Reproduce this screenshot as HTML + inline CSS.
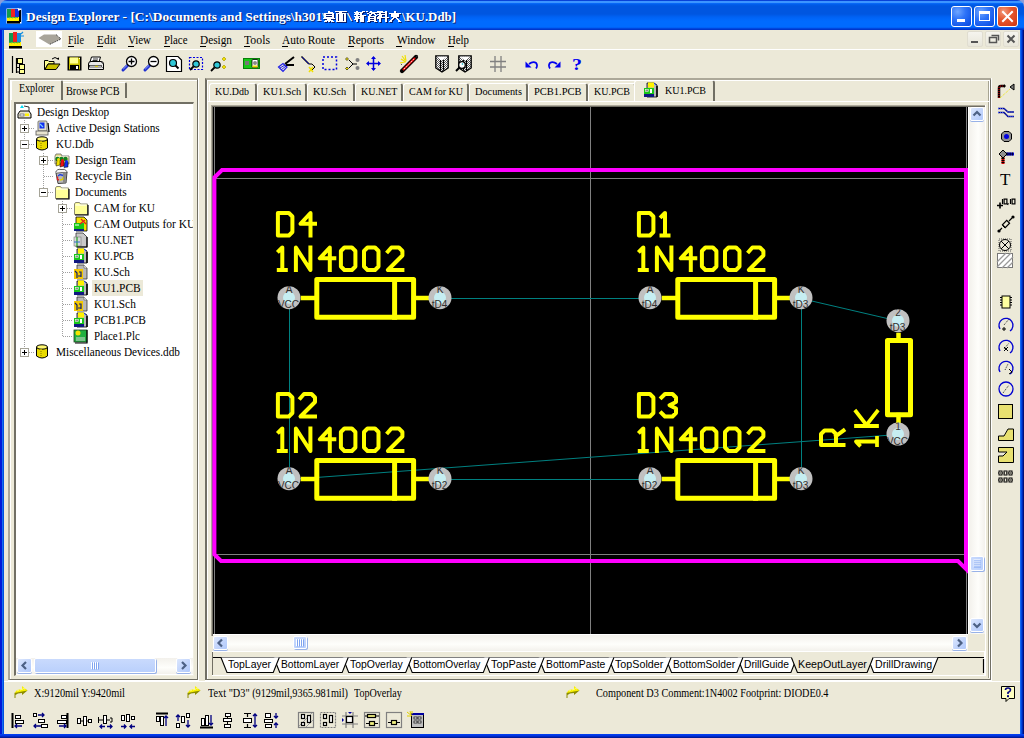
<!DOCTYPE html>
<html><head><meta charset="utf-8"><style>
*{margin:0;padding:0;box-sizing:border-box}
html,body{width:1024px;height:738px;overflow:hidden}
body{position:relative;background:#ECE9D8;font-family:"Liberation Serif",serif;font-size:12px;color:#000}
.a{position:absolute}
.t{white-space:nowrap;line-height:1}
svg{position:absolute;overflow:visible}
</style></head><body>
<div class="a" style="left:0px;top:0px;width:1024px;height:8px;background:#8C9CD8"></div><div class="a" style="left:0;top:0;width:1024px;height:30px;border-radius:7px 7px 0 0;background:linear-gradient(to bottom,#0842D8 0px,#0842D8 1px,#3C95FF 1px,#3C95FF 3px,#0F6FFF 3px,#0060EE 4px,#0056E0 6px,#0056E0 14px,#0062F4 17px,#006BFF 21px,#006BFF 27px,#0058F0 28px,#0036CC 29px,#0036CC 30px)"></div><div class="a" style="left:0px;top:30px;width:4px;height:708px;background:linear-gradient(to right,#0019D8 0,#0019D8 2px,#166EF0 2px,#166EF0 3px,#0050E0 3px)"></div><div class="a" style="left:1020px;top:30px;width:4px;height:708px;background:linear-gradient(to right,#1666F2 0,#1666F2 1px,#0048E0 1px,#0048E0 2px,#0028B8 2px,#0028B8 3px,#001078 3px)"></div><div class="a" style="left:0px;top:734px;width:1024px;height:4px;background:linear-gradient(to bottom,#0543F2 0,#0030E0 50%,#0020A8 75%,#00148A 100%)"></div><div class="a t" style="left:26px;top:10.11px;font-family:'Liberation Serif';font-size:13px;font-weight:700;color:#fff;transform:scaleX(1.0336);transform-origin:0 0;text-shadow:1px 1px 0 #0A1E6E;">Design Explorer - [C:\Documents and Settings\h301\</div><div class="a t" style="left:402px;top:10.11px;font-family:'Liberation Serif';font-size:13px;font-weight:700;color:#fff;transform:scaleX(0.9900);transform-origin:0 0;text-shadow:1px 1px 0 #0A1E6E;">\KU.Ddb]</div><div class="a" style="left:951px;top:6px;width:21px;height:21px;border:1px solid #fff;border-radius:3px;background:radial-gradient(circle at 30% 25%,#6FA6FF 0,#2F74F8 40%,#1155E8 80%,#0C48D8 100%)"></div><div class="a" style="left:974px;top:6px;width:21px;height:21px;border:1px solid #fff;border-radius:3px;background:radial-gradient(circle at 30% 25%,#6FA6FF 0,#2F74F8 40%,#1155E8 80%,#0C48D8 100%)"></div><div class="a" style="left:997px;top:6px;width:21px;height:21px;border:1px solid #fff;border-radius:3px;background:radial-gradient(circle at 30% 25%,#F39B7E 0,#E5582E 40%,#D7401C 80%,#C0340F 100%)"></div><div class="a" style="left:957px;top:19px;width:8px;height:3px;background:#fff"></div><div class="a" style="left:979px;top:11px;width:11px;height:10px;border:1px solid #fff;border-top-width:3px"></div><svg style="left:997px;top:6px" width="21" height="21"><path d="M6 6 L15 15 M15 6 L6 15" stroke="#fff" stroke-width="2" stroke-linecap="square"/></svg><div class="a" style="left:4px;top:49px;width:1016px;height:1px;background:#fff"></div><svg style="left:8px;top:32px" width="17" height="17" viewBox="0 0 17 17"><rect x="1" y="1" width="4" height="9" fill="#109A50"/><rect x="5" y="0" width="4" height="10" fill="#F02020"/><rect x="9" y="1" width="4" height="9" fill="#1890E0"/><path d="M13 2 L15 0 M12 4 L16 4" stroke="#1890E0" stroke-width="1.2"/><rect x="1" y="10" width="12" height="4" fill="#FFF000"/><path d="M1 11 L2 10 L3 11 L5 10 L6 11 L8 10 L9 11 L11 10 L12 11" stroke="#109A50" stroke-width="0.8" fill="none"/><rect x="1" y="14" width="13" height="2.5" fill="#000"/></svg><div class="a" style="left:36px;top:31px;width:26px;height:16px;background:#fff"></div><svg style="left:36px;top:31px" width="26" height="16" viewBox="0 0 26 16"><path d="M2.5 7 L8 3.5 L20 3.5 L25 8 L13.5 13.5 Z" fill="#A8A49A"/><path d="M20 3.5 L25 8 L13.5 13.5" fill="none" stroke="#222" stroke-width="1" stroke-dasharray="1 1"/></svg><div class="a t" style="left:68px;top:33.11px;font-family:'Liberation Serif';font-size:13px;font-weight:400;color:#000;transform:scaleX(0.7907);transform-origin:0 0;">File</div><div class="a" style="left:68px;top:46px;width:6px;height:1px;background:#000"></div><div class="a t" style="left:97px;top:33.11px;font-family:'Liberation Serif';font-size:13px;font-weight:400;color:#000;transform:scaleX(0.8767);transform-origin:0 0;">Edit</div><div class="a" style="left:97px;top:46px;width:6px;height:1px;background:#000"></div><div class="a t" style="left:128px;top:33.11px;font-family:'Liberation Serif';font-size:13px;font-weight:400;color:#000;transform:scaleX(0.8397);transform-origin:0 0;">View</div><div class="a" style="left:128px;top:46px;width:6px;height:1px;background:#000"></div><div class="a t" style="left:163.5px;top:33.11px;font-family:'Liberation Serif';font-size:13px;font-weight:400;color:#000;transform:scaleX(0.8346);transform-origin:0 0;">Place</div><div class="a" style="left:164px;top:46px;width:6px;height:1px;background:#000"></div><div class="a t" style="left:200px;top:33.11px;font-family:'Liberation Serif';font-size:13px;font-weight:400;color:#000;transform:scaleX(0.8685);transform-origin:0 0;">Design</div><div class="a" style="left:200px;top:46px;width:6px;height:1px;background:#000"></div><div class="a t" style="left:244px;top:33.11px;font-family:'Liberation Serif';font-size:13px;font-weight:400;color:#000;transform:scaleX(0.9053);transform-origin:0 0;">Tools</div><div class="a" style="left:244px;top:46px;width:6px;height:1px;background:#000"></div><div class="a t" style="left:282px;top:33.11px;font-family:'Liberation Serif';font-size:13px;font-weight:400;color:#000;transform:scaleX(0.8788);transform-origin:0 0;">Auto Route</div><div class="a" style="left:282px;top:46px;width:6px;height:1px;background:#000"></div><div class="a t" style="left:348px;top:33.11px;font-family:'Liberation Serif';font-size:13px;font-weight:400;color:#000;transform:scaleX(0.8899);transform-origin:0 0;">Reports</div><div class="a" style="left:348px;top:46px;width:6px;height:1px;background:#000"></div><div class="a t" style="left:396.5px;top:33.11px;font-family:'Liberation Serif';font-size:13px;font-weight:400;color:#000;transform:scaleX(0.8701);transform-origin:0 0;">Window</div><div class="a" style="left:396px;top:46px;width:6px;height:1px;background:#000"></div><div class="a t" style="left:448px;top:33.11px;font-family:'Liberation Serif';font-size:13px;font-weight:400;color:#000;transform:scaleX(0.8307);transform-origin:0 0;">Help</div><div class="a" style="left:448px;top:46px;width:6px;height:1px;background:#000"></div><div class="a" style="left:967px;top:31px;width:16px;height:16px;background:linear-gradient(#F5F4EE,#E8E6DA);border:1px solid #E0DDD0;border-radius:2px"></div><div class="a" style="left:985px;top:31px;width:16px;height:16px;background:linear-gradient(#F5F4EE,#E8E6DA);border:1px solid #E0DDD0;border-radius:2px"></div><div class="a" style="left:1003px;top:31px;width:16px;height:16px;background:linear-gradient(#F5F4EE,#E8E6DA);border:1px solid #E0DDD0;border-radius:2px"></div><div class="a" style="left:971px;top:41px;width:7px;height:2px;background:#555"></div><svg style="left:985px;top:31px" width="16" height="16"><rect x="4.5" y="6.5" width="7" height="5" fill="none" stroke="#555" stroke-width="1.5"/><path d="M6.5 4.5 H13.5 V9.5" fill="none" stroke="#555" stroke-width="1.5"/></svg><svg style="left:1003px;top:31px" width="16" height="16"><path d="M4.5 4.5 L11.5 11.5 M11.5 4.5 L4.5 11.5" stroke="#555" stroke-width="2"/></svg><svg style="left:11px;top:55px" width="15" height="19" viewBox="0 0 15 19"><path d="M1.5 1 V18" stroke="#000" stroke-width="1.2"/><path d="M5.5 3 V18 M5.5 6.5 H7 M5.5 12.5 H8 M5.5 17 H8" stroke="#000" stroke-width="1.2" fill="none"/><rect x="6.5" y="3.5" width="5" height="5" fill="#FFFF90" stroke="#000" stroke-width="1"/><rect x="8.5" y="9.5" width="5" height="5" fill="#FFFF90" stroke="#000" stroke-width="1"/><rect x="8.5" y="14.5" width="5" height="4" fill="#FFFF90" stroke="#000" stroke-width="1"/></svg><svg style="left:43px;top:56px" width="18" height="15" viewBox="0 0 18 15"><path d="M1.5 4.5 L5 4.5 L6 5.5 L11 5.5 L11 8 L5 8 L2 13.5 L1.5 13.5 Z" fill="#FFFF90" stroke="#000" stroke-width="1"/><path d="M2 13.5 L5 8 L17 8 L13 13.5 Z" fill="#C8C000" stroke="#000" stroke-width="1"/><path d="M9 3 Q12 0 15 3" fill="none" stroke="#000" stroke-width="1"/><path d="M13.5 2.5 L16 4 L16 1.5 Z" fill="#000"/></svg><svg style="left:67px;top:56px" width="15" height="15" viewBox="0 0 15 15"><rect x="0.5" y="0.5" width="14" height="14" fill="#000"/><rect x="2" y="1.5" width="11" height="12" fill="#C8C000"/><rect x="3" y="1.5" width="8" height="6" fill="#FFFF90"/><rect x="3" y="9" width="9" height="5" fill="#000"/><rect x="9" y="10" width="2" height="3" fill="#fff"/><rect x="12" y="2" width="1" height="1" fill="#fff"/></svg><svg style="left:87px;top:56px" width="18" height="15" viewBox="0 0 18 15"><path d="M4.5 1 H13.5 L12 6 H3 Z" fill="#fff" stroke="#000" stroke-width="1"/><path d="M6 3 H11 M5.5 4.5 H10.5" stroke="#000" stroke-width="0.8"/><path d="M1.5 8 Q1.5 5.5 4 5.5 H14 Q16.5 5.5 16.5 8 V13.5 H1.5 Z" fill="#E8E8E8" stroke="#000" stroke-width="1"/><rect x="2.5" y="9.5" width="12" height="1.5" fill="#fff" stroke="#000" stroke-width="0.6"/><rect x="8" y="9.8" width="3" height="1" fill="#E0D000"/><path d="M14 6 L16 8 M14 10 L16 12" stroke="#555" stroke-width="0.8"/></svg><svg style="left:121px;top:55px" width="17" height="17" viewBox="0 0 17 17"><path d="M2 15 L7 10" stroke="#2030D0" stroke-width="3" stroke-linecap="round"/><path d="M2.2 14.2 L6 10.4" stroke="#90A0FF" stroke-width="1"/><circle cx="10.5" cy="6.5" r="5" fill="#fff" stroke="#000" stroke-width="1.3"/><path d="M7.5 6.5 H13.5 M10.5 3.5 V9.5" stroke="#000" stroke-width="1.3"/></svg><svg style="left:143px;top:55px" width="17" height="17" viewBox="0 0 17 17"><path d="M2 15 L7 10" stroke="#2030D0" stroke-width="3" stroke-linecap="round"/><path d="M2.2 14.2 L6 10.4" stroke="#90A0FF" stroke-width="1"/><circle cx="10.5" cy="6.5" r="5" fill="#fff" stroke="#000" stroke-width="1.3"/><path d="M7.5 6.5 H13.5" stroke="#000" stroke-width="1.3"/></svg><svg style="left:166px;top:56px" width="17" height="16" viewBox="0 0 17 16"><path d="M0.5 0.5 H12 L15.5 4 V15.5 H0.5 Z" fill="#fff" stroke="#000" stroke-width="1.2"/><circle cx="7" cy="7" r="3.5" fill="#30C8D8" stroke="#000" stroke-width="1.2"/><path d="M9.5 9.5 L12.5 12.5" stroke="#000" stroke-width="2"/></svg><svg style="left:188px;top:56px" width="16" height="16" viewBox="0 0 16 16"><rect x="1.5" y="1.5" width="13" height="12" fill="none" stroke="#0000E0" stroke-width="1.2" stroke-dasharray="2 1.5"/><circle cx="8" cy="8" r="3.2" fill="#30C8D8" stroke="#000" stroke-width="1.2"/><path d="M5.5 10.5 L2 14" stroke="#000" stroke-width="1.8"/></svg><svg style="left:210px;top:56px" width="17" height="16" viewBox="0 0 17 16"><circle cx="7" cy="9" r="3.2" fill="#30C8D8" stroke="#000" stroke-width="1.2"/><path d="M4.5 11.5 L1 15" stroke="#000" stroke-width="1.8"/><path d="M14 1 L16 3 L14 5 L12 3 Z M14 9 L16 11 L14 13 L12 11 Z" fill="#F0E000" stroke="#A09000" stroke-width="0.6"/></svg><svg style="left:243px;top:58px" width="18" height="12" viewBox="0 0 18 12"><rect x="0.5" y="0.5" width="16" height="10" fill="#18C818" stroke="#088008"/><rect x="2" y="3" width="4" height="4" fill="#777"/><rect x="9" y="1.5" width="6" height="8" rx="1" fill="#fff" stroke="#000" stroke-width="0.8"/><circle cx="12" cy="5" r="2" fill="#888"/><rect x="9.5" y="7.5" width="5" height="2" fill="#F0E000"/></svg><svg style="left:277px;top:55px" width="18" height="18" viewBox="0 0 18 18"><path d="M8 9 L17 2 M9 10 L17 10" stroke="#000" stroke-width="2"/><path d="M1.5 12 L6 8.5 L10 12 L6 16.5 Z" fill="none" stroke="#2020E8" stroke-width="1.2"/><path d="M3 13 L8 10 M4 15 L9 11" stroke="#2020E8" stroke-width="1"/></svg><svg style="left:300px;top:55px" width="16" height="18" viewBox="0 0 16 18"><path d="M1.5 1.5 L9 9" stroke="#000" stroke-width="1.5"/><path d="M2 2 L9 9" stroke="#0000C0" stroke-width="0.8"/><path d="M9 9 L12 9 L15 12 L12 15" fill="none" stroke="#000" stroke-width="1"/><path d="M9 12 L13 17 M13 12 L9 17" stroke="#F0E000" stroke-width="1.5"/></svg><svg style="left:322px;top:56px" width="16" height="15" viewBox="0 0 16 15"><rect x="1" y="1" width="13.5" height="12.5" fill="none" stroke="#0000E0" stroke-width="1.5" stroke-dasharray="2 2"/></svg><svg style="left:344px;top:56px" width="17" height="16" viewBox="0 0 17 16"><path d="M5 4 L9 8 L5 12" fill="none" stroke="#000" stroke-width="1"/><path d="M9 8 L13 8" stroke="#000" stroke-width="1"/><circle cx="13.5" cy="4" r="2" fill="#808080"/><circle cx="13.5" cy="12" r="2" fill="#808080"/><path d="M3 1.5 L4.5 3 L3 4.5 L1.5 3 Z M3 11 L4.5 12.5 L3 14 L1.5 12.5 Z" fill="#F0E000" stroke="#000" stroke-width="0.6"/></svg><svg style="left:366px;top:56px" width="15" height="15" viewBox="0 0 15 15"><path d="M7.5 1 V14 M1 7.5 H14" stroke="#0000E0" stroke-width="1.5"/><path d="M7.5 0 L5 3 H10 Z M7.5 15 L5 12 H10 Z M0 7.5 L3 5 V10 Z M15 7.5 L12 5 V10 Z" fill="#0000E0"/></svg><svg style="left:399px;top:54px" width="20" height="20" viewBox="0 0 20 20"><path d="M3 17 L17 3" stroke="#000" stroke-width="4.2" stroke-linecap="round"/><path d="M4 16 L16 4" stroke="#E81010" stroke-width="2.2"/><path d="M5 15 L15 5" stroke="#fff" stroke-width="0.8" stroke-dasharray="1.5 1"/><path d="M16.5 3.5 L19 1.5" stroke="#333" stroke-width="1"/><path d="M2 5 L7 8 M6 1 L7 7 M1 9 L6 8 M3 2 L6 6" stroke="#F0E000" stroke-width="1.2"/><path d="M2 10 L3 11" stroke="#555" stroke-width="1"/></svg><svg style="left:435px;top:55px" width="14" height="18" viewBox="0 0 14 18"><defs><pattern id="hatch" width="2" height="2" patternUnits="userSpaceOnUse"><rect width="2" height="2" fill="#fff"/><rect width="1" height="1" fill="#555"/><rect x="1" y="1" width="1" height="1" fill="#555"/></pattern></defs><path d="M0.8 1 L13.2 1 L13.2 13 L7 17 L0.8 13 Z" fill="url(#hatch)" stroke="#000" stroke-width="1.3"/><path d="M1.5 1.5 L7 5.5 L12.5 1.5 Z" fill="#fff"/><path d="M5.5 5 L5.5 15.5 M8.5 5 L8.5 15.5" stroke="#000" stroke-width="1.2"/></svg><svg style="left:455px;top:55px" width="17" height="18" viewBox="0 0 17 18"><path d="M3.8 1 L16.2 1 L16.2 13 L10 17 L3.8 13 Z" fill="url(#hatch)" stroke="#000" stroke-width="1.3"/><path d="M4.5 1.5 L10 5.5 L15.5 1.5 Z" fill="#fff"/><path d="M8.5 5 L8.5 15.5 M11.5 5 L11.5 15.5" stroke="#000" stroke-width="1.2"/><circle cx="7" cy="10" r="3.3" fill="#fff" stroke="#000" stroke-width="1.3"/><path d="M7 8.5 L8 9.5" stroke="#20C0D0" stroke-width="1.5"/><path d="M4.5 12.5 L1 16" stroke="#000" stroke-width="2"/></svg><svg style="left:490px;top:56px" width="16" height="16" viewBox="0 0 16 16"><path d="M5 0 V16 M11 0 V16 M0 5.5 H16 M0 11 H16" stroke="#808080" stroke-width="1.3"/></svg><svg style="left:525px;top:60px" width="14" height="10" viewBox="0 0 14 10"><path d="M4 4 Q8 0.8 11.2 3 Q13 5.5 11 8.5" fill="none" stroke="#0000F0" stroke-width="1.7"/><path d="M0.5 1.5 L0.5 7.5 L6.5 7.5 Z" fill="#0000F0"/></svg><svg style="left:547px;top:60px" width="14" height="10" viewBox="0 0 14 10"><path d="M10 4 Q6 0.8 2.8 3 Q1 5.5 3 8.5" fill="none" stroke="#0000F0" stroke-width="1.7"/><path d="M13.5 1.5 L13.5 7.5 L7.5 7.5 Z" fill="#0000F0"/></svg><div class="a t" style="left:571.5px;top:56.60px;font-family:'Liberation Serif';font-size:16px;font-weight:700;color:#0000F0;transform:scaleX(1.2500);transform-origin:0 0;">?</div><div class="a" style="left:988px;top:80px;width:1px;height:598px;background:#A7A492"></div><div class="a" style="left:989px;top:80px;width:1px;height:598px;background:#fff"></div><svg style="left:997px;top:83px" width="18" height="17" viewBox="0 0 18 17"><path d="M2 15 V5 Q2 3 4 3 H7" fill="none" stroke="#000" stroke-width="2.5"/><path d="M2 15 V5 Q2 3 4 3 H7" fill="none" stroke="#D00000" stroke-width="1.2" stroke-dasharray="1 1"/><path d="M7 1 L9 3 L7 5 Z" fill="#000"/><path d="M3 15 L13 6" stroke="#F0E800" stroke-width="1" stroke-dasharray="1 1"/><path d="M17 1 L13 4 L17 7 Z" fill="#808080" stroke="#000" stroke-width="1"/></svg><svg style="left:997px;top:106px" width="18" height="13" viewBox="0 0 18 13"><path d="M1 2.5 H7 L11 6 H17 M1 6.5 H7 L11 10.5 H17" fill="none" stroke="#000080" stroke-width="1.5"/><path d="M1 2.5 H7 L11 6 H17 M1 6.5 H7 L11 10.5 H17" fill="none" stroke="#4060FF" stroke-width="1" stroke-dasharray="1 1"/></svg><svg style="left:1001px;top:131px" width="11" height="11" viewBox="0 0 11 11"><path d="M3 0.5 H8 L10.5 3 V8 L8 10.5 H3 L0.5 8 V3 Z" fill="#909090" stroke="#000" stroke-width="1"/><circle cx="5.5" cy="5.5" r="2.5" fill="#0000E0"/></svg><svg style="left:999px;top:149px" width="16" height="16" viewBox="0 0 16 16"><path d="M4 5 L4 15" stroke="#D00000" stroke-width="3"/><path d="M4 5 L4 15" stroke="#000" stroke-width="3" stroke-dasharray="1 1"/><path d="M4 5 H15" stroke="#0000D0" stroke-width="3"/><path d="M4 5 H15" stroke="#000" stroke-width="3" stroke-dasharray="1 1.2"/><path d="M4 1 L8 5 L4 9 L0 5 Z" fill="#909090" stroke="#000" stroke-width="1"/></svg><div class="a t" style="left:1000px;top:171px;font-family:'Liberation Serif';font-size:17px;font-weight:400;color:#000">T</div><svg style="left:996px;top:198px" width="22" height="12" viewBox="0 0 22 12"><path d="M1 7.5 H7 M4 4.5 V10.5" stroke="#000" stroke-width="1.6"/><g fill="none" stroke="#000" stroke-width="1.2"><path d="M6.5 1 V6"/><rect x="8.1" y="1.1" width="2.8" height="4.8"/><path d="M12.2 5 L11.6 7"/><path d="M14.5 1 V6"/><rect x="16.1" y="1.1" width="2.8" height="4.8"/></g></svg><svg style="left:996px;top:214px" width="20" height="20" viewBox="0 0 20 20"><path d="M3 17 L6 14 M13 7 L16 4" stroke="#000" stroke-width="1.2"/><circle cx="3" cy="17" r="1.6" fill="#000"/><circle cx="17" cy="3" r="1.6" fill="#000"/><rect x="7" y="8" width="6" height="4" transform="rotate(-45 10 10)" fill="none" stroke="#000" stroke-width="1.2"/><path d="M6.5 11.5 L9 14" stroke="#000" stroke-width="1"/></svg><svg style="left:998px;top:238px" width="14" height="14" viewBox="0 0 14 14"><rect x="1" y="1" width="12" height="12" fill="none" stroke="#555" stroke-width="1" stroke-dasharray="1 1"/><circle cx="7" cy="7" r="5.5" fill="none" stroke="#000" stroke-width="1"/><path d="M3 3 L11 11 M11 3 L3 11" stroke="#000" stroke-width="1"/></svg><svg style="left:997px;top:253px" width="16" height="15" viewBox="0 0 16 15"><rect x="0.5" y="0.5" width="15" height="14" fill="#fff" stroke="#777" stroke-width="1"/><path d="M0 9 L9 0 M0 14 L14 0 M5 15 L16 4 M10 15 L16 9" stroke="#999" stroke-width="1.3"/></svg><svg style="left:999px;top:295px" width="14" height="14" viewBox="0 0 14 14"><rect x="3" y="1" width="8" height="12" fill="#FFFFA0" stroke="#000" stroke-width="1"/><path d="M1 2.5 H3 M1 5 H3 M1 7.5 H3 M1 10 H3 M11 2.5 H13 M11 5 H13 M11 7.5 H13 M11 10 H13" stroke="#000" stroke-width="1"/></svg><svg style="left:998px;top:317px" width="16" height="16" viewBox="0 0 16 16"><path d="M2 12 A7 7 0 1 1 12 14" fill="none" stroke="#0000D0" stroke-width="1.3"/><path d="M6 8 L11 2" stroke="#000" stroke-width="0.8" stroke-dasharray="1 1"/><path d="M4 12 H8 M6 10 V14" stroke="#000" stroke-width="1"/></svg><svg style="left:998px;top:339px" width="16" height="16" viewBox="0 0 16 16"><path d="M2 12 A7 7 0 1 1 12 14" fill="none" stroke="#0000D0" stroke-width="1.3"/><path d="M6 10 L11 4" stroke="#000" stroke-width="0.8" stroke-dasharray="1 1"/><path d="M6 8 L10 12 M10 8 L6 12" stroke="#000" stroke-width="1"/></svg><svg style="left:998px;top:360px" width="16" height="16" viewBox="0 0 16 16"><path d="M2 12 A7 7 0 1 1 12 14" fill="none" stroke="#0000D0" stroke-width="1.3"/><path d="M7 10 L10 4" stroke="#000" stroke-width="0.8" stroke-dasharray="1 1"/><path d="M11 9 L14 12 L11 14" fill="none" stroke="#000" stroke-width="1"/></svg><svg style="left:998px;top:381px" width="16" height="16" viewBox="0 0 16 16"><circle cx="8" cy="8" r="7" fill="none" stroke="#0000D0" stroke-width="1.3"/><path d="M5 12 L11 4" stroke="#000" stroke-width="0.8" stroke-dasharray="1 1"/></svg><svg style="left:998px;top:404px" width="15" height="15" viewBox="0 0 15 15"><rect x="0.5" y="0.5" width="14" height="14" fill="#E8E070" stroke="#000" stroke-width="1"/></svg><svg style="left:998px;top:426px" width="16" height="15" viewBox="0 0 16 15"><path d="M0.5 14.5 V10 H6 L10 3 H15.5 V14.5 Z" fill="#E8E070" stroke="#000" stroke-width="1"/></svg><svg style="left:998px;top:447px" width="16" height="16" viewBox="0 0 16 16"><path d="M0.5 0.5 H15.5 V15.5 H0.5 V9 L5 9 L9 5 L0.5 5 Z" fill="#E8E070" stroke="#000" stroke-width="1"/><path d="M0.5 5 L0.5 0.5" stroke="#000"/></svg><svg style="left:998px;top:470px" width="16" height="14" viewBox="0 0 16 14"><g fill="none" stroke="#000" stroke-width="1"><rect x="1" y="1" width="3" height="4"/><rect x="6" y="1" width="3" height="4"/><rect x="11" y="1" width="3" height="4"/><rect x="1" y="8" width="3" height="4"/><rect x="6" y="8" width="3" height="4"/><rect x="11" y="8" width="3" height="4"/></g><path d="M0 3 H16 M0 10 H16" stroke="#000" stroke-width="1" stroke-dasharray="1 1"/></svg><div class="a" style="left:8px;top:78px;width:191px;height:603px;border-left:2px solid #ACA899;border-top:2px solid #ACA899;border-right:2px solid #716F64;border-bottom:2px solid #716F64"></div><div class="a" style="left:10px;top:80px;width:187px;height:599px;border-left:1px solid #fff;border-top:1px solid #fff"></div><div class="a" style="left:198px;top:78px;width:1px;height:603px;background:#fff"></div><div class="a" style="left:8px;top:680px;width:191px;height:1px;background:#fff"></div><div class="a" style="left:62px;top:82px;width:65px;height:16px;background:#ECE9D8;border-left:1px solid #fff;border-top:1px solid #fff;border-right:2px solid #716F64;border-radius:2px 2px 0 0"></div><div class="a" style="left:11px;top:80px;width:52px;height:20px;background:#ECE9D8;border-left:1px solid #fff;border-top:1px solid #fff;border-right:2px solid #716F64;border-radius:2px 2px 0 0"></div><div class="a t" style="left:19px;top:81.95px;font-family:'Liberation Serif';font-size:12px;font-weight:400;color:#000;transform:scaleX(0.8336);transform-origin:0 0;">Explorer</div><div class="a t" style="left:66px;top:84.95px;font-family:'Liberation Serif';font-size:12px;font-weight:400;color:#000;transform:scaleX(0.8581);transform-origin:0 0;">Browse PCB</div><div class="a" style="left:14px;top:102px;width:180px;height:574px;background:#fff;border-left:2px solid #716F64;border-top:2px solid #716F64;border-right:1px solid #F1EFE2;border-bottom:1px solid #F1EFE2"></div><div class="a" style="left:16px;top:104px;width:177px;height:554px;overflow:hidden"><svg style="left:0px;top:0px" width="177" height="554"><g transform="translate(-16,-104)"><g stroke="#A0A0A0" stroke-width="1" stroke-dasharray="1 1" shape-rendering="crispEdges"><line x1="24.5" y1="120" x2="24.5" y2="352"/><line x1="43.5" y1="153" x2="43.5" y2="192"/><line x1="62.5" y1="201" x2="62.5" y2="336"/><line x1="25" y1="128.5" x2="35" y2="128.5"/><line x1="25" y1="144.5" x2="35" y2="144.5"/><line x1="44" y1="160.5" x2="54" y2="160.5"/><line x1="44" y1="176.5" x2="54" y2="176.5"/><line x1="44" y1="192.5" x2="54" y2="192.5"/><line x1="63" y1="208.5" x2="73" y2="208.5"/><line x1="63" y1="224.5" x2="73" y2="224.5"/><line x1="63" y1="240.5" x2="73" y2="240.5"/><line x1="63" y1="256.5" x2="73" y2="256.5"/><line x1="63" y1="272.5" x2="73" y2="272.5"/><line x1="63" y1="288.5" x2="73" y2="288.5"/><line x1="63" y1="304.5" x2="73" y2="304.5"/><line x1="63" y1="320.5" x2="73" y2="320.5"/><line x1="63" y1="336.5" x2="73" y2="336.5"/><line x1="25" y1="352.5" x2="35" y2="352.5"/></g></g></svg><div class="a" style="left:76px;top:176px;width:51px;height:16px;background:#ECE9D8"></div><svg style="left:0px;top:0px" width="16" height="16"><path d="M2 10 L4 7 L13 7 L15 10 L15 14 L2 14 Z" fill="#E8E4D0" stroke="#000" stroke-width="1"/><rect x="4" y="10" width="4" height="2" fill="#fff" stroke="#444" stroke-width="0.6"/><rect x="9" y="9.5" width="4" height="2.5" fill="#FFF200"/><path d="M6 1 L8 4 L4 4 Z" fill="#00D8F0"/><path d="M8 2 L13 3 L13 7" fill="none" stroke="#000" stroke-width="0.8"/></svg><div class="a t" style="left:21px;top:1.11px;font-family:'Liberation Serif';font-size:13px;font-weight:400;color:#000;transform:scaleX(0.8655);transform-origin:0 0;">Design Desktop</div><svg style="left:19px;top:16px" width="16" height="16"><rect x="3" y="1" width="9" height="10" rx="1" fill="#E4E0CC" stroke="#555" stroke-width="0.8"/><rect x="4.5" y="2.5" width="5" height="6" fill="#1030F0"/><path d="M5 4 L8 7" stroke="#7EC8FF" stroke-width="1.2"/><rect x="1" y="11" width="12" height="4" fill="#E8E4D0" stroke="#555" stroke-width="0.8"/><path d="M13 3 L14 12" stroke="#000" stroke-width="1.2"/></svg><svg style="left:4px;top:20px" width="9" height="9"><rect x="0.5" y="0.5" width="8" height="8" fill="#fff" stroke="#A5A397"/><path d="M2 4.5 H7" stroke="#000" stroke-width="1"/><path d="M4.5 2 V7" stroke="#000" stroke-width="1"/></svg><div class="a t" style="left:40px;top:17.11px;font-family:'Liberation Serif';font-size:13px;font-weight:400;color:#000;transform:scaleX(0.8650);transform-origin:0 0;">Active Design Stations</div><svg style="left:19px;top:32px" width="16" height="16"><path d="M1.5 3 L1.5 12 Q7 16 12.5 12 L12.5 3" fill="#E8DA00" stroke="#000" stroke-width="1"/><ellipse cx="7" cy="3" rx="5.5" ry="2.2" fill="#FFF870" stroke="#000" stroke-width="1"/><path d="M6 5 L6 13" stroke="#B8A800" stroke-width="2" stroke-dasharray="1 1"/></svg><svg style="left:4px;top:36px" width="9" height="9"><rect x="0.5" y="0.5" width="8" height="8" fill="#fff" stroke="#A5A397"/><path d="M2 4.5 H7" stroke="#000" stroke-width="1"/></svg><div class="a t" style="left:40px;top:33.11px;font-family:'Liberation Serif';font-size:13px;font-weight:400;color:#000;transform:scaleX(0.8509);transform-origin:0 0;">KU.Ddb</div><svg style="left:38px;top:48px" width="16" height="16"><path d="M1 4 L2 2 L7 2 L8 4 L15 4 L15 12 L1 12 Z" fill="#E8E090" stroke="#666" stroke-width="0.8"/><path d="M1.5 5 H14.5" stroke="#fff" stroke-width="1"/><circle cx="3.5" cy="7" r="2.2" fill="#108020"/><circle cx="7.5" cy="7" r="2.2" fill="#108020"/><circle cx="11.5" cy="7" r="2.2" fill="#108020"/><path d="M2 14 L3 8 L6 8 L6 13 Z" fill="#F0E000" stroke="#000" stroke-width="0.5"/><path d="M6 15 L7 9 L10 9 L10 14 Z" fill="#F01010" stroke="#000" stroke-width="0.5"/><path d="M10 15.5 L11 10 L14 10 L14 15 Z" fill="#1030F0" stroke="#000" stroke-width="0.5"/><circle cx="4.5" cy="7.5" r="1.5" fill="#F0E000"/><circle cx="8.5" cy="8.5" r="1.5" fill="#F01010"/><circle cx="12.5" cy="9.5" r="1.5" fill="#1030F0"/></svg><svg style="left:23px;top:52px" width="9" height="9"><rect x="0.5" y="0.5" width="8" height="8" fill="#fff" stroke="#A5A397"/><path d="M2 4.5 H7" stroke="#000" stroke-width="1"/><path d="M4.5 2 V7" stroke="#000" stroke-width="1"/></svg><div class="a t" style="left:59px;top:49.11px;font-family:'Liberation Serif';font-size:13px;font-weight:400;color:#000;transform:scaleX(0.8857);transform-origin:0 0;">Design Team</div><svg style="left:38px;top:64px" width="16" height="16"><path d="M2 5 L13 4 L12 15 L4 15.5 Z" fill="#B8B8B8" stroke="#333" stroke-width="0.9"/><path d="M9 5 L12 4.5 L11.5 15 L9 15.3 Z" fill="#888"/><path d="M1.5 4.5 Q3 0.5 7 1.5 Q11 0 13.5 4" fill="#F4F4F4" stroke="#333" stroke-width="0.8"/><path d="M4 8 L6 6.5 L9 7.5" stroke="#2040E0" stroke-width="1.4" fill="none"/><path d="M3.5 8.5 L3.5 11.5 L5 12" stroke="#E02020" stroke-width="1.4" fill="none"/><path d="M6 12 L8.5 11.5 L9 9.5" stroke="#E0D000" stroke-width="1.4" fill="none"/></svg><div class="a t" style="left:59px;top:65.11px;font-family:'Liberation Serif';font-size:13px;font-weight:400;color:#000;transform:scaleX(0.8857);transform-origin:0 0;">Recycle Bin</div><svg style="left:38px;top:80px" width="16" height="16"><path d="M1.5 4 L2.5 2.5 L6.5 2.5 L7.5 4 L14.5 4 L14.5 14.5 L1.5 14.5 Z" fill="#FFFF98" stroke="#8A8870" stroke-width="1"/><path d="M2.5 5 H13.5" stroke="#fff" stroke-width="1"/><path d="M15 5 L15 15 L2 15" fill="none" stroke="#000" stroke-width="1.2"/></svg><svg style="left:23px;top:84px" width="9" height="9"><rect x="0.5" y="0.5" width="8" height="8" fill="#fff" stroke="#A5A397"/><path d="M2 4.5 H7" stroke="#000" stroke-width="1"/></svg><div class="a t" style="left:59px;top:81.11px;font-family:'Liberation Serif';font-size:13px;font-weight:400;color:#000;transform:scaleX(0.8730);transform-origin:0 0;">Documents</div><svg style="left:57px;top:96px" width="16" height="16"><path d="M1.5 4 L2.5 2.5 L6.5 2.5 L7.5 4 L14.5 4 L14.5 14.5 L1.5 14.5 Z" fill="#FFFF98" stroke="#8A8870" stroke-width="1"/><path d="M2.5 5 H13.5" stroke="#fff" stroke-width="1"/><path d="M15 5 L15 15 L2 15" fill="none" stroke="#000" stroke-width="1.2"/></svg><svg style="left:42px;top:100px" width="9" height="9"><rect x="0.5" y="0.5" width="8" height="8" fill="#fff" stroke="#A5A397"/><path d="M2 4.5 H7" stroke="#000" stroke-width="1"/><path d="M4.5 2 V7" stroke="#000" stroke-width="1"/></svg><div class="a t" style="left:78px;top:97.11px;font-family:'Liberation Serif';font-size:13px;font-weight:400;color:#000;transform:scaleX(0.8707);transform-origin:0 0;">CAM for KU</div><svg style="left:57px;top:112px" width="16" height="16"><path d="M3 1 L11 1 L14 4 L14 15 L3 15 Z" fill="#F4E000" stroke="#000" stroke-width="0.8"/><rect x="1" y="7" width="10" height="6" fill="#18C818"/><path d="M2 9 L6 9" stroke="#fff" stroke-width="1"/><rect x="1" y="13" width="10" height="2" fill="#102080"/><path d="M8 3 L13 8 M7 8 L12 4" stroke="#E02020" stroke-width="1.3"/></svg><div class="a t" style="left:78px;top:113.11px;font-family:'Liberation Serif';font-size:13px;font-weight:400;color:#000;transform:scaleX(0.885);transform-origin:0 0;">CAM Outputs for KU</div><svg style="left:57px;top:128px" width="16" height="16"><path d="M3 1 L10 1 L14 5 L14 15 L3 15 Z" fill="#C8C8C8" stroke="#333" stroke-width="0.8"/><rect x="1" y="5" width="7" height="9" fill="#D8D8D8" stroke="#777" stroke-width="0.6"/><path d="M4 5 L4 15" stroke="#20A020" stroke-width="1.2"/><path d="M1 10 L7 10" stroke="#3070D0" stroke-width="1"/><path d="M14 5 L14 15 L4 15" fill="none" stroke="#000" stroke-width="1.2"/></svg><div class="a t" style="left:78px;top:129.11px;font-family:'Liberation Serif';font-size:13px;font-weight:400;color:#000;transform:scaleX(0.8457);transform-origin:0 0;">KU.NET</div><svg style="left:57px;top:144px" width="16" height="16"><path d="M4 1 L11 1 L14 3 L14 15 L4 15 Z" fill="#B8B8B8" stroke="#000" stroke-width="0.8"/><rect x="5" y="0.5" width="6" height="5" fill="#FFF200"/><rect x="1" y="6" width="10" height="6" fill="#18C818"/><rect x="2.5" y="7.5" width="3" height="2" fill="#888" stroke="#fff" stroke-width="0.5"/><rect x="7" y="7" width="2" height="4" fill="#fff"/><rect x="1" y="12" width="10" height="3" fill="#101880"/><path d="M11 1 L13 3" stroke="#2040E0" stroke-width="1"/><path d="M14 4 L14 15" stroke="#000" stroke-width="1.5"/></svg><div class="a t" style="left:78px;top:145.11px;font-family:'Liberation Serif';font-size:13px;font-weight:400;color:#000;transform:scaleX(0.8582);transform-origin:0 0;">KU.PCB</div><svg style="left:57px;top:160px" width="16" height="16"><path d="M4 1 L11 1 L14 4 L14 15 L4 15 Z" fill="#B8B8B8" stroke="#333" stroke-width="0.8"/><rect x="1" y="5" width="9" height="10" fill="#F4C800"/><path d="M2 7 L4 9 L4 14 M6 8 L8 8 L8 13 M5 12 L8 12" stroke="#102070" stroke-width="1.2" fill="none"/><path d="M11 1 L11 4 L14 4" fill="#fff" stroke="#555" stroke-width="0.6"/></svg><div class="a t" style="left:78px;top:161.11px;font-family:'Liberation Serif';font-size:13px;font-weight:400;color:#000;transform:scaleX(0.8644);transform-origin:0 0;">KU.Sch</div><svg style="left:57px;top:176px" width="16" height="16"><path d="M4 1 L11 1 L14 3 L14 15 L4 15 Z" fill="#B8B8B8" stroke="#000" stroke-width="0.8"/><rect x="5" y="0.5" width="6" height="5" fill="#FFF200"/><rect x="1" y="6" width="10" height="6" fill="#18C818"/><rect x="2.5" y="7.5" width="3" height="2" fill="#888" stroke="#fff" stroke-width="0.5"/><rect x="7" y="7" width="2" height="4" fill="#fff"/><rect x="1" y="12" width="10" height="3" fill="#101880"/><path d="M11 1 L13 3" stroke="#2040E0" stroke-width="1"/><path d="M14 4 L14 15" stroke="#000" stroke-width="1.5"/></svg><div class="a t" style="left:78px;top:177.11px;font-family:'Liberation Serif';font-size:13px;font-weight:400;color:#000;transform:scaleX(0.8793);transform-origin:0 0;">KU1.PCB</div><svg style="left:57px;top:192px" width="16" height="16"><path d="M4 1 L11 1 L14 4 L14 15 L4 15 Z" fill="#B8B8B8" stroke="#333" stroke-width="0.8"/><rect x="1" y="5" width="9" height="10" fill="#F4C800"/><path d="M2 7 L4 9 L4 14 M6 8 L8 8 L8 13 M5 12 L8 12" stroke="#102070" stroke-width="1.2" fill="none"/><path d="M11 1 L11 4 L14 4" fill="#fff" stroke="#555" stroke-width="0.6"/></svg><div class="a t" style="left:78px;top:193.11px;font-family:'Liberation Serif';font-size:13px;font-weight:400;color:#000;transform:scaleX(0.8703);transform-origin:0 0;">KU1.Sch</div><svg style="left:57px;top:208px" width="16" height="16"><path d="M4 1 L11 1 L14 3 L14 15 L4 15 Z" fill="#B8B8B8" stroke="#000" stroke-width="0.8"/><rect x="5" y="0.5" width="6" height="5" fill="#FFF200"/><rect x="1" y="6" width="10" height="6" fill="#18C818"/><rect x="2.5" y="7.5" width="3" height="2" fill="#888" stroke="#fff" stroke-width="0.5"/><rect x="7" y="7" width="2" height="4" fill="#fff"/><rect x="1" y="12" width="10" height="3" fill="#101880"/><path d="M11 1 L13 3" stroke="#2040E0" stroke-width="1"/><path d="M14 4 L14 15" stroke="#000" stroke-width="1.5"/></svg><div class="a t" style="left:78px;top:209.11px;font-family:'Liberation Serif';font-size:13px;font-weight:400;color:#000;transform:scaleX(0.8828);transform-origin:0 0;">PCB1.PCB</div><svg style="left:57px;top:224px" width="16" height="16"><rect x="1" y="2" width="13" height="12" fill="#20B040" stroke="#204020" stroke-width="0.8"/><circle cx="5" cy="5" r="2.5" fill="#F4E400"/><path d="M3 10 L12 10 M3 12 L12 12" stroke="#D8D8D8" stroke-width="1"/><path d="M14 2 L14 15 L2 15" fill="none" stroke="#000" stroke-width="1.2"/></svg><div class="a t" style="left:78px;top:225.11px;font-family:'Liberation Serif';font-size:13px;font-weight:400;color:#000;transform:scaleX(0.8401);transform-origin:0 0;">Place1.Plc</div><svg style="left:19px;top:240px" width="16" height="16"><path d="M1.5 3 L1.5 12 Q7 16 12.5 12 L12.5 3" fill="#E8DA00" stroke="#000" stroke-width="1"/><ellipse cx="7" cy="3" rx="5.5" ry="2.2" fill="#FFF870" stroke="#000" stroke-width="1"/><path d="M6 5 L6 13" stroke="#B8A800" stroke-width="2" stroke-dasharray="1 1"/></svg><svg style="left:4px;top:244px" width="9" height="9"><rect x="0.5" y="0.5" width="8" height="8" fill="#fff" stroke="#A5A397"/><path d="M2 4.5 H7" stroke="#000" stroke-width="1"/><path d="M4.5 2 V7" stroke="#000" stroke-width="1"/></svg><div class="a t" style="left:40px;top:241.11px;font-family:'Liberation Serif';font-size:13px;font-weight:400;color:#000;transform:scaleX(0.8673);transform-origin:0 0;">Miscellaneous Devices.ddb</div></div><div class="a" style="left:205px;top:78px;width:787px;height:603px;border-left:2px solid #716F64;border-top:2px solid #ACA899;border-right:2px solid #716F64;border-bottom:2px solid #716F64"></div><div class="a" style="left:207px;top:80px;width:783px;height:599px;border-left:1px solid #fff;border-top:1px solid #fff"></div><div class="a" style="left:991px;top:78px;width:1px;height:603px;background:#fff"></div><div class="a" style="left:205px;top:680px;width:787px;height:1px;background:#fff"></div><div class="a" style="left:209px;top:83px;width:48px;height:18px;background:#ECE9D8;border-left:1px solid #fff;border-top:1px solid #fff;border-right:2px solid #716F64;border-radius:3px 3px 0 0"></div><div class="a t" style="left:215px;top:86.29px;font-family:'Liberation Serif';font-size:11px;font-weight:400;color:#000;transform:scaleX(0.9044);transform-origin:0 0;">KU.Ddb</div><div class="a" style="left:257px;top:83px;width:50px;height:18px;background:#ECE9D8;border-left:1px solid #fff;border-top:1px solid #fff;border-right:2px solid #716F64;border-radius:3px 3px 0 0"></div><div class="a t" style="left:262.8px;top:86.29px;font-family:'Liberation Serif';font-size:11px;font-weight:400;color:#000;transform:scaleX(0.9399);transform-origin:0 0;">KU1.Sch</div><div class="a" style="left:307px;top:83px;width:48px;height:18px;background:#ECE9D8;border-left:1px solid #fff;border-top:1px solid #fff;border-right:2px solid #716F64;border-radius:3px 3px 0 0"></div><div class="a t" style="left:312.7px;top:86.29px;font-family:'Liberation Serif';font-size:11px;font-weight:400;color:#000;transform:scaleX(0.9476);transform-origin:0 0;">KU.Sch</div><div class="a" style="left:355px;top:83px;width:48px;height:18px;background:#ECE9D8;border-left:1px solid #fff;border-top:1px solid #fff;border-right:2px solid #716F64;border-radius:3px 3px 0 0"></div><div class="a t" style="left:360.6px;top:86.29px;font-family:'Liberation Serif';font-size:11px;font-weight:400;color:#000;transform:scaleX(0.9093);transform-origin:0 0;">KU.NET</div><div class="a" style="left:403px;top:83px;width:66px;height:18px;background:#ECE9D8;border-left:1px solid #fff;border-top:1px solid #fff;border-right:2px solid #716F64;border-radius:3px 3px 0 0"></div><div class="a t" style="left:408.6px;top:86.29px;font-family:'Liberation Serif';font-size:11px;font-weight:400;color:#000;transform:scaleX(0.9109);transform-origin:0 0;">CAM for KU</div><div class="a" style="left:469px;top:83px;width:59px;height:18px;background:#ECE9D8;border-left:1px solid #fff;border-top:1px solid #fff;border-right:2px solid #716F64;border-radius:3px 3px 0 0"></div><div class="a t" style="left:475px;top:86.29px;font-family:'Liberation Serif';font-size:11px;font-weight:400;color:#000;transform:scaleX(0.9379);transform-origin:0 0;">Documents</div><div class="a" style="left:528px;top:83px;width:60px;height:18px;background:#ECE9D8;border-left:1px solid #fff;border-top:1px solid #fff;border-right:2px solid #716F64;border-radius:3px 3px 0 0"></div><div class="a t" style="left:534px;top:86.29px;font-family:'Liberation Serif';font-size:11px;font-weight:400;color:#000;transform:scaleX(0.9530);transform-origin:0 0;">PCB1.PCB</div><div class="a" style="left:588px;top:83px;width:48px;height:18px;background:#ECE9D8;border-left:1px solid #fff;border-top:1px solid #fff;border-right:2px solid #716F64;border-radius:3px 3px 0 0"></div><div class="a t" style="left:594px;top:86.29px;font-family:'Liberation Serif';font-size:11px;font-weight:400;color:#000;transform:scaleX(0.9128);transform-origin:0 0;">KU.PCB</div><div class="a" style="left:634px;top:80px;width:81px;height:22px;background:#ECE9D8;border-left:1px solid #fff;border-top:1px solid #fff;border-right:2px solid #716F64;border-radius:3px 3px 0 0"></div><div class="a t" style="left:665px;top:84.79px;font-family:'Liberation Serif';font-size:11px;font-weight:400;color:#000;transform:scaleX(0.9124);transform-origin:0 0;">KU1.PCB</div><svg style="left:643px;top:82px" width="16" height="16" viewBox="0 0 16 16"><path d="M4 1 L11 1 L14 3 L14 15 L4 15 Z" fill="#B8B8B8" stroke="#000" stroke-width="0.8"/><rect x="5" y="0.5" width="6" height="5" fill="#FFF200"/><rect x="1" y="6" width="10" height="6" fill="#18C818"/><rect x="2.5" y="7.5" width="3" height="2" fill="#888" stroke="#fff" stroke-width="0.5"/><rect x="7" y="7" width="2" height="4" fill="#fff"/><rect x="1" y="12" width="10" height="3" fill="#101880"/><path d="M11 1 L13 3" stroke="#2040E0" stroke-width="1"/><path d="M14 4 L14 15" stroke="#000" stroke-width="1.5"/></svg><div class="a" style="left:207px;top:101px;width:783px;height:1px;background:#fff"></div><div class="a" style="left:211px;top:105px;width:774px;height:531px;border-left:1px solid #ACA899;border-top:1px solid #ACA899"></div><div class="a" style="left:212px;top:106px;width:773px;height:530px;border-left:1px solid #716F64;border-top:1px solid #716F64"></div><div class="a" style="left:985px;top:105px;width:1px;height:571px;background:#fff"></div><div class="a" style="left:213px;top:107px;width:755px;height:527px;background:#000"></div><div class="a" style="left:968px;top:107px;width:17px;height:527px;background:linear-gradient(to right,#FFFFFF 0,#FFFFFF 1px,#F3F1EC 1px,#FEFEFB 60%,#F3F1EC)"></div><div class="a" style="left:213px;top:634px;width:755px;height:17px;background:linear-gradient(to bottom,#FFFFFF 0,#FFFFFF 1px,#F3F1EC 1px,#FEFEFB 60%,#F3F1EC)"></div><div class="a" style="left:968px;top:634px;width:16px;height:16px;background:#ECE9D8"></div><div class="a" style="left:212px;top:675px;width:773px;height:1px;background:#fff"></div><div class="a" style="left:984px;top:651px;width:1px;height:25px;background:#fff"></div><div class="a" style="left:212px;top:651px;width:772px;height:24px;border-left:1px solid #716F64"></div><div class="a" style="left:212px;top:651px;width:772px;height:1px;background:#fff"></div><svg style="left:213px;top:107px" width="755" height="527" viewBox="213 107 755 527"><rect x="213" y="107" width="755" height="527" fill="#000"/><g stroke="#808080" stroke-width="1" shape-rendering="crispEdges"><line x1="214.5" y1="107" x2="214.5" y2="634"/><line x1="590.5" y1="107" x2="590.5" y2="634"/><line x1="966.5" y1="107" x2="966.5" y2="634"/><line x1="214" y1="178.5" x2="967" y2="178.5"/><line x1="214" y1="554.5" x2="967" y2="554.5"/></g><path d="M214.4,177.5 L222,170 L966,170 L966,569 L958,561 L221,561 L214.4,554.4 Z" fill="none" stroke="#FF00FF" stroke-width="4" stroke-linejoin="miter"/><g stroke="#008080" stroke-width="1"><line x1="440" y1="298.5" x2="650" y2="298.5"/><line x1="289.5" y1="298" x2="289.5" y2="479"/><line x1="801" y1="298.5" x2="898" y2="321"/><line x1="801.5" y1="298" x2="801.5" y2="479"/><line x1="440" y1="479.5" x2="650" y2="479.5"/><line x1="289" y1="479.5" x2="898" y2="434.5"/></g><g fill="none" stroke="#FFFF00" stroke-linecap="square" stroke-linejoin="round"><rect x="316.8" y="279.5" width="96.8" height="37.8" stroke-width="5"/><line x1="394.6" y1="279.5" x2="394.6" y2="317.3" stroke-width="5"/><line x1="303" y1="298" x2="316" y2="298" stroke-width="4.5"/><line x1="414" y1="298" x2="427" y2="298" stroke-width="4.5"/><g stroke-width="4"><path transform="translate(277.9,213) scale(1,1.0)" d="M0,0 L11,0 L14.5,3.5 L14.5,19 L11,22.5 L0,22.5 Z"/><path transform="translate(300.5,213) scale(1,1.0)" d="M10,22.5 L10,0 L0,10.8 L14.5,10.8"/><path transform="translate(278.8,247.5) scale(1,1.0)" d="M0,3.5 L3.5,0 L3.5,22.5 M0,22.5 L7,22.5"/><path transform="translate(295.9,247.5) scale(1,1.0)" d="M0,22.5 L0,0 L14.5,22.5 L14.5,0"/><path transform="translate(319.8,247.5) scale(1,1.0)" d="M10,22.5 L10,0 L0,10.8 L14.5,10.8"/><path transform="translate(340.9,247.5) scale(1,1.0)" d="M3.5,0 L11,0 L14.5,3.5 L14.5,19 L11,22.5 L3.5,22.5 L0,19 L0,3.5 Z"/><path transform="translate(364,247.5) scale(1,1.0)" d="M3.5,0 L11,0 L14.5,3.5 L14.5,19 L11,22.5 L3.5,22.5 L0,19 L0,3.5 Z"/><path transform="translate(387.9,247.5) scale(1,1.0)" d="M0,4 L3.5,0 L11,0 L14.5,3.5 L14.5,8 L0,22.5 L14.5,22.5"/></g><rect x="677.8" y="279.5" width="96.8" height="37.8" stroke-width="5"/><line x1="755.6" y1="279.5" x2="755.6" y2="317.3" stroke-width="5"/><line x1="664" y1="298" x2="677" y2="298" stroke-width="4.5"/><line x1="775" y1="298" x2="788" y2="298" stroke-width="4.5"/><g stroke-width="4"><path transform="translate(638.9,213) scale(1,1.0)" d="M0,0 L11,0 L14.5,3.5 L14.5,19 L11,22.5 L0,22.5 Z"/><path transform="translate(661.5,213) scale(1,1.0)" d="M0,3.5 L3.5,0 L3.5,22.5 M0,22.5 L7,22.5"/><path transform="translate(639.8,247.5) scale(1,1.0)" d="M0,3.5 L3.5,0 L3.5,22.5 M0,22.5 L7,22.5"/><path transform="translate(656.9,247.5) scale(1,1.0)" d="M0,22.5 L0,0 L14.5,22.5 L14.5,0"/><path transform="translate(680.8,247.5) scale(1,1.0)" d="M10,22.5 L10,0 L0,10.8 L14.5,10.8"/><path transform="translate(701.9,247.5) scale(1,1.0)" d="M3.5,0 L11,0 L14.5,3.5 L14.5,19 L11,22.5 L3.5,22.5 L0,19 L0,3.5 Z"/><path transform="translate(725,247.5) scale(1,1.0)" d="M3.5,0 L11,0 L14.5,3.5 L14.5,19 L11,22.5 L3.5,22.5 L0,19 L0,3.5 Z"/><path transform="translate(748.9,247.5) scale(1,1.0)" d="M0,4 L3.5,0 L11,0 L14.5,3.5 L14.5,8 L0,22.5 L14.5,22.5"/></g><rect x="316.8" y="460.5" width="96.8" height="37.8" stroke-width="5"/><line x1="394.6" y1="460.5" x2="394.6" y2="498.3" stroke-width="5"/><line x1="303" y1="479" x2="316" y2="479" stroke-width="4.5"/><line x1="414" y1="479" x2="427" y2="479" stroke-width="4.5"/><g stroke-width="4"><path transform="translate(277.9,394) scale(1,1.0)" d="M0,0 L11,0 L14.5,3.5 L14.5,19 L11,22.5 L0,22.5 Z"/><path transform="translate(300.5,394) scale(1,1.0)" d="M0,4 L3.5,0 L11,0 L14.5,3.5 L14.5,8 L0,22.5 L14.5,22.5"/><path transform="translate(278.8,428.5) scale(1,1.0)" d="M0,3.5 L3.5,0 L3.5,22.5 M0,22.5 L7,22.5"/><path transform="translate(295.9,428.5) scale(1,1.0)" d="M0,22.5 L0,0 L14.5,22.5 L14.5,0"/><path transform="translate(319.8,428.5) scale(1,1.0)" d="M10,22.5 L10,0 L0,10.8 L14.5,10.8"/><path transform="translate(340.9,428.5) scale(1,1.0)" d="M3.5,0 L11,0 L14.5,3.5 L14.5,19 L11,22.5 L3.5,22.5 L0,19 L0,3.5 Z"/><path transform="translate(364,428.5) scale(1,1.0)" d="M3.5,0 L11,0 L14.5,3.5 L14.5,19 L11,22.5 L3.5,22.5 L0,19 L0,3.5 Z"/><path transform="translate(387.9,428.5) scale(1,1.0)" d="M0,4 L3.5,0 L11,0 L14.5,3.5 L14.5,8 L0,22.5 L14.5,22.5"/></g><rect x="677.8" y="460.5" width="96.8" height="37.8" stroke-width="5"/><line x1="755.6" y1="460.5" x2="755.6" y2="498.3" stroke-width="5"/><line x1="664" y1="479" x2="677" y2="479" stroke-width="4.5"/><line x1="775" y1="479" x2="788" y2="479" stroke-width="4.5"/><g stroke-width="4"><path transform="translate(638.9,394) scale(1,1.0)" d="M0,0 L11,0 L14.5,3.5 L14.5,19 L11,22.5 L0,22.5 Z"/><path transform="translate(661.5,394) scale(1,1.0)" d="M0,3.5 L3.5,0 L11,0 L14.5,3.5 L14.5,8 L8,11.2 L14.5,14.5 L14.5,19 L11,22.5 L3.5,22.5 L0,19"/><path transform="translate(639.8,428.5) scale(1,1.0)" d="M0,3.5 L3.5,0 L3.5,22.5 M0,22.5 L7,22.5"/><path transform="translate(656.9,428.5) scale(1,1.0)" d="M0,22.5 L0,0 L14.5,22.5 L14.5,0"/><path transform="translate(680.8,428.5) scale(1,1.0)" d="M10,22.5 L10,0 L0,10.8 L14.5,10.8"/><path transform="translate(701.9,428.5) scale(1,1.0)" d="M3.5,0 L11,0 L14.5,3.5 L14.5,19 L11,22.5 L3.5,22.5 L0,19 L0,3.5 Z"/><path transform="translate(725,428.5) scale(1,1.0)" d="M3.5,0 L11,0 L14.5,3.5 L14.5,19 L11,22.5 L3.5,22.5 L0,19 L0,3.5 Z"/><path transform="translate(748.9,428.5) scale(1,1.0)" d="M0,4 L3.5,0 L11,0 L14.5,3.5 L14.5,8 L0,22.5 L14.5,22.5"/></g><rect x="887.5" y="340.4" width="23" height="74.3" stroke-width="5"/><line x1="898.5" y1="335" x2="898.5" y2="340" stroke-width="4.5"/><line x1="898.5" y1="415" x2="898.5" y2="421" stroke-width="4.5"/><g stroke-width="4"><g transform="translate(821,445) matrix(0,-1,1,0,0,0)"><path transform="translate(0,0) scale(1,1.0)" d="M0,22.5 L0,0 L11,0 L14.5,3.5 L14.5,11.5 L11,15 L0,15 M9,15 L14.5,22.5"/></g><g transform="translate(856,445) matrix(0,-1,1,0,0,0)"><path transform="translate(0,0) scale(1,0.9333333333333333)" d="M0,3.5 L3.5,0 L3.5,22.5 M0,22.5 L7,22.5"/><path transform="translate(19,0) scale(1,0.9333333333333333)" d="M0,0 L0,22.5 M14.5,0 L1,11.2 L14.5,22.5"/></g></g></g><circle cx="289" cy="297.7" r="11.5" fill="#C0C0C0"/><circle cx="289" cy="297.7" r="6" fill="#C6EEF2"/><clipPath id="pc289_297"><circle cx="289" cy="297.7" r="11.5"/></clipPath><g font-family="Liberation Sans" font-size="10" fill="#303030" text-anchor="middle" clip-path="url(#pc289_297)"><text x="289" y="293.4">A</text><text x="288.5" y="308.3">VCC</text></g><circle cx="440" cy="297.7" r="11.5" fill="#C0C0C0"/><circle cx="440" cy="297.7" r="6" fill="#C6EEF2"/><clipPath id="pc440_297"><circle cx="440" cy="297.7" r="11.5"/></clipPath><g font-family="Liberation Sans" font-size="10" fill="#303030" text-anchor="middle" clip-path="url(#pc440_297)"><text x="440" y="293.4">K</text><text x="439.5" y="308.3">tD4</text></g><circle cx="650" cy="297.7" r="11.5" fill="#C0C0C0"/><circle cx="650" cy="297.7" r="6" fill="#C6EEF2"/><clipPath id="pc650_297"><circle cx="650" cy="297.7" r="11.5"/></clipPath><g font-family="Liberation Sans" font-size="10" fill="#303030" text-anchor="middle" clip-path="url(#pc650_297)"><text x="650" y="293.4">A</text><text x="649.5" y="308.3">tD4</text></g><circle cx="801" cy="297.7" r="11.5" fill="#C0C0C0"/><circle cx="801" cy="297.7" r="6" fill="#C6EEF2"/><clipPath id="pc801_297"><circle cx="801" cy="297.7" r="11.5"/></clipPath><g font-family="Liberation Sans" font-size="10" fill="#303030" text-anchor="middle" clip-path="url(#pc801_297)"><text x="801" y="293.4">K</text><text x="800.5" y="308.3">tD3</text></g><circle cx="289" cy="478.7" r="11.5" fill="#C0C0C0"/><circle cx="289" cy="478.7" r="6" fill="#C6EEF2"/><clipPath id="pc289_478"><circle cx="289" cy="478.7" r="11.5"/></clipPath><g font-family="Liberation Sans" font-size="10" fill="#303030" text-anchor="middle" clip-path="url(#pc289_478)"><text x="289" y="474.4">A</text><text x="288.5" y="489.3">VCC</text></g><circle cx="440" cy="478.7" r="11.5" fill="#C0C0C0"/><circle cx="440" cy="478.7" r="6" fill="#C6EEF2"/><clipPath id="pc440_478"><circle cx="440" cy="478.7" r="11.5"/></clipPath><g font-family="Liberation Sans" font-size="10" fill="#303030" text-anchor="middle" clip-path="url(#pc440_478)"><text x="440" y="474.4">K</text><text x="439.5" y="489.3">tD2</text></g><circle cx="650" cy="478.7" r="11.5" fill="#C0C0C0"/><circle cx="650" cy="478.7" r="6" fill="#C6EEF2"/><clipPath id="pc650_478"><circle cx="650" cy="478.7" r="11.5"/></clipPath><g font-family="Liberation Sans" font-size="10" fill="#303030" text-anchor="middle" clip-path="url(#pc650_478)"><text x="650" y="474.4">A</text><text x="649.5" y="489.3">tD2</text></g><circle cx="801" cy="478.7" r="11.5" fill="#C0C0C0"/><circle cx="801" cy="478.7" r="6" fill="#C6EEF2"/><clipPath id="pc801_478"><circle cx="801" cy="478.7" r="11.5"/></clipPath><g font-family="Liberation Sans" font-size="10" fill="#303030" text-anchor="middle" clip-path="url(#pc801_478)"><text x="801" y="474.4">K</text><text x="800.5" y="489.3">tD3</text></g><circle cx="898" cy="320.7" r="11.5" fill="#C0C0C0"/><circle cx="898" cy="320.7" r="6" fill="#C6EEF2"/><clipPath id="pc898_320"><circle cx="898" cy="320.7" r="11.5"/></clipPath><g font-family="Liberation Sans" font-size="10" fill="#303030" text-anchor="middle" clip-path="url(#pc898_320)"><text x="898" y="316.4">2</text><text x="897.5" y="331.3">tD3</text></g><circle cx="898" cy="434" r="11.5" fill="#C0C0C0"/><circle cx="898" cy="434" r="6" fill="#C6EEF2"/><clipPath id="pc898_434"><circle cx="898" cy="434" r="11.5"/></clipPath><g font-family="Liberation Sans" font-size="10" fill="#303030" text-anchor="middle" clip-path="url(#pc898_434)"><text x="898" y="429.7">1</text><text x="897.5" y="444.6">VCC</text></g></svg><svg style="left:6px;top:8px" width="17" height="17" viewBox="0 0 17 17"><rect x="0.5" y="0.5" width="15" height="15" fill="#fff"/><rect x="1" y="1" width="4" height="9" fill="#109A50"/><rect x="5" y="1" width="4" height="9" fill="#F02020"/><rect x="9" y="1" width="4" height="9" fill="#1030E0"/><rect x="1" y="9" width="12" height="4" fill="#FFF000"/><path d="M1 10 L2 9 L3 10 L5 9 L6 10 L8 9 L9 10 L11 9 L12 10" stroke="#109A50" stroke-width="0.8" fill="none"/><rect x="1" y="13" width="13" height="2.5" fill="#000"/><rect x="13" y="2" width="2" height="12" fill="#000"/><path d="M12 0 L13 3" stroke="#fff" stroke-width="1"/></svg><svg style="left:323px;top:11px" width="14" height="14" viewBox="0 0 14 14"><g fill="none" stroke-width="1.05" shape-rendering="crispEdges"><path transform="translate(1,1)" d="M5.5,0 V2.5 M5.5,1.5 H8.5 M1.5,2.5 H9.5 V6.5 H1.5 Z M1.5,4.5 H9.5 M0,7.5 H11 M5.5,6.5 V11 M5.5,8 L1,11 M5.5,8 L10,11" stroke="#0A1E6E"/><path transform="translate(2,1)" d="M5.5,0 V2.5 M5.5,1.5 H8.5 M1.5,2.5 H9.5 V6.5 H1.5 Z M1.5,4.5 H9.5 M0,7.5 H11 M5.5,6.5 V11 M5.5,8 L1,11 M5.5,8 L10,11" stroke="#0A1E6E"/><path d="M5.5,0 V2.5 M5.5,1.5 H8.5 M1.5,2.5 H9.5 V6.5 H1.5 Z M1.5,4.5 H9.5 M0,7.5 H11 M5.5,6.5 V11 M5.5,8 L1,11 M5.5,8 L10,11" stroke="#fff"/><path transform="translate(1,0)" d="M5.5,0 V2.5 M5.5,1.5 H8.5 M1.5,2.5 H9.5 V6.5 H1.5 Z M1.5,4.5 H9.5 M0,7.5 H11 M5.5,6.5 V11 M5.5,8 L1,11 M5.5,8 L10,11" stroke="#fff"/></g></svg><svg style="left:335px;top:11px" width="14" height="14" viewBox="0 0 14 14"><g fill="none" stroke-width="1.05" shape-rendering="crispEdges"><path transform="translate(1,1)" d="M0,0.5 H11 M5.5,0.5 L4.5,2.5 M1.5,2.5 H9.5 V10.5 H1.5 Z M4.5,2.5 V10.5 M6.5,2.5 V10.5 M4.5,5.5 H6.5 M4.5,7.5 H6.5" stroke="#0A1E6E"/><path transform="translate(2,1)" d="M0,0.5 H11 M5.5,0.5 L4.5,2.5 M1.5,2.5 H9.5 V10.5 H1.5 Z M4.5,2.5 V10.5 M6.5,2.5 V10.5 M4.5,5.5 H6.5 M4.5,7.5 H6.5" stroke="#0A1E6E"/><path d="M0,0.5 H11 M5.5,0.5 L4.5,2.5 M1.5,2.5 H9.5 V10.5 H1.5 Z M4.5,2.5 V10.5 M6.5,2.5 V10.5 M4.5,5.5 H6.5 M4.5,7.5 H6.5" stroke="#fff"/><path transform="translate(1,0)" d="M0,0.5 H11 M5.5,0.5 L4.5,2.5 M1.5,2.5 H9.5 V10.5 H1.5 Z M4.5,2.5 V10.5 M6.5,2.5 V10.5 M4.5,5.5 H6.5 M4.5,7.5 H6.5" stroke="#fff"/></g></svg><svg style="left:354px;top:11px" width="14" height="14" viewBox="0 0 14 14"><g fill="none" stroke-width="1.05" shape-rendering="crispEdges"><path transform="translate(1,1)" d="M2.5,0 V1 M0,1.5 H5 M1.5,2 V3 M3.5,2 V3 M0,3.5 H5 M0,5.5 H5 M2.5,3.5 V11 M2.5,6 L0,9 M2.5,6 L5,8 M10,0.5 L6.5,1.5 M6.5,1.5 V11 M6.5,4.5 H11 M8.5,4.5 V11" stroke="#0A1E6E"/><path transform="translate(2,1)" d="M2.5,0 V1 M0,1.5 H5 M1.5,2 V3 M3.5,2 V3 M0,3.5 H5 M0,5.5 H5 M2.5,3.5 V11 M2.5,6 L0,9 M2.5,6 L5,8 M10,0.5 L6.5,1.5 M6.5,1.5 V11 M6.5,4.5 H11 M8.5,4.5 V11" stroke="#0A1E6E"/><path d="M2.5,0 V1 M0,1.5 H5 M1.5,2 V3 M3.5,2 V3 M0,3.5 H5 M0,5.5 H5 M2.5,3.5 V11 M2.5,6 L0,9 M2.5,6 L5,8 M10,0.5 L6.5,1.5 M6.5,1.5 V11 M6.5,4.5 H11 M8.5,4.5 V11" stroke="#fff"/><path transform="translate(1,0)" d="M2.5,0 V1 M0,1.5 H5 M1.5,2 V3 M3.5,2 V3 M0,3.5 H5 M0,5.5 H5 M2.5,3.5 V11 M2.5,6 L0,9 M2.5,6 L5,8 M10,0.5 L6.5,1.5 M6.5,1.5 V11 M6.5,4.5 H11 M8.5,4.5 V11" stroke="#fff"/></g></svg><svg style="left:366px;top:11px" width="14" height="14" viewBox="0 0 14 14"><g fill="none" stroke-width="1.05" shape-rendering="crispEdges"><path transform="translate(1,1)" d="M0.5,0.5 L1.5,1.5 M0.5,3.5 L1.5,2.5 M4.5,0 L3.5,2 M4,1.5 H9.5 L8.5,2.5 M6.5,2 L3,4.5 M6.5,2 L10,4.5 M2.5,5.5 H8.5 V9.5 H2.5 Z M2.5,7.5 H8.5 M3.5,9.5 L1.5,11 M7.5,9.5 L9.5,11" stroke="#0A1E6E"/><path transform="translate(2,1)" d="M0.5,0.5 L1.5,1.5 M0.5,3.5 L1.5,2.5 M4.5,0 L3.5,2 M4,1.5 H9.5 L8.5,2.5 M6.5,2 L3,4.5 M6.5,2 L10,4.5 M2.5,5.5 H8.5 V9.5 H2.5 Z M2.5,7.5 H8.5 M3.5,9.5 L1.5,11 M7.5,9.5 L9.5,11" stroke="#0A1E6E"/><path d="M0.5,0.5 L1.5,1.5 M0.5,3.5 L1.5,2.5 M4.5,0 L3.5,2 M4,1.5 H9.5 L8.5,2.5 M6.5,2 L3,4.5 M6.5,2 L10,4.5 M2.5,5.5 H8.5 V9.5 H2.5 Z M2.5,7.5 H8.5 M3.5,9.5 L1.5,11 M7.5,9.5 L9.5,11" stroke="#fff"/><path transform="translate(1,0)" d="M0.5,0.5 L1.5,1.5 M0.5,3.5 L1.5,2.5 M4.5,0 L3.5,2 M4,1.5 H9.5 L8.5,2.5 M6.5,2 L3,4.5 M6.5,2 L10,4.5 M2.5,5.5 H8.5 V9.5 H2.5 Z M2.5,7.5 H8.5 M3.5,9.5 L1.5,11 M7.5,9.5 L9.5,11" stroke="#fff"/></g></svg><svg style="left:377px;top:11px" width="14" height="14" viewBox="0 0 14 14"><g fill="none" stroke-width="1.05" shape-rendering="crispEdges"><path transform="translate(1,1)" d="M0.5,0.5 L1,2 M4.5,0.5 L4,2 M0,3.5 H5 M2.5,0 V11 M2.5,4 L0,8 M2.5,4 L5,7 M6.5,1 L7.5,2 M6.5,3 L7.5,4 M5.5,6.5 H11 M8.5,0 V11" stroke="#0A1E6E"/><path transform="translate(2,1)" d="M0.5,0.5 L1,2 M4.5,0.5 L4,2 M0,3.5 H5 M2.5,0 V11 M2.5,4 L0,8 M2.5,4 L5,7 M6.5,1 L7.5,2 M6.5,3 L7.5,4 M5.5,6.5 H11 M8.5,0 V11" stroke="#0A1E6E"/><path d="M0.5,0.5 L1,2 M4.5,0.5 L4,2 M0,3.5 H5 M2.5,0 V11 M2.5,4 L0,8 M2.5,4 L5,7 M6.5,1 L7.5,2 M6.5,3 L7.5,4 M5.5,6.5 H11 M8.5,0 V11" stroke="#fff"/><path transform="translate(1,0)" d="M0.5,0.5 L1,2 M4.5,0.5 L4,2 M0,3.5 H5 M2.5,0 V11 M2.5,4 L0,8 M2.5,4 L5,7 M6.5,1 L7.5,2 M6.5,3 L7.5,4 M5.5,6.5 H11 M8.5,0 V11" stroke="#fff"/></g></svg><svg style="left:388.5px;top:11px" width="14" height="14" viewBox="0 0 14 14"><g fill="none" stroke-width="1.05" shape-rendering="crispEdges"><path transform="translate(1,1)" d="M0,2.5 H11 M5.5,0 V5 M3,3.5 L2,5.5 M3,3.5 L3.5,5 M8,3.5 L9,5.5 M8,3.5 L7.5,5 M5.5,5 L0.5,11 M5.5,5 L10.5,11" stroke="#0A1E6E"/><path transform="translate(2,1)" d="M0,2.5 H11 M5.5,0 V5 M3,3.5 L2,5.5 M3,3.5 L3.5,5 M8,3.5 L9,5.5 M8,3.5 L7.5,5 M5.5,5 L0.5,11 M5.5,5 L10.5,11" stroke="#0A1E6E"/><path d="M0,2.5 H11 M5.5,0 V5 M3,3.5 L2,5.5 M3,3.5 L3.5,5 M8,3.5 L9,5.5 M8,3.5 L7.5,5 M5.5,5 L0.5,11 M5.5,5 L10.5,11" stroke="#fff"/><path transform="translate(1,0)" d="M0,2.5 H11 M5.5,0 V5 M3,3.5 L2,5.5 M3,3.5 L3.5,5 M8,3.5 L9,5.5 M8,3.5 L7.5,5 M5.5,5 L0.5,11 M5.5,5 L10.5,11" stroke="#fff"/></g></svg><div class="a t" style="left:347px;top:10.11px;font-family:'Liberation Serif';font-size:13px;font-weight:700;color:#fff;transform:scaleX(1.3793);transform-origin:0 0;text-shadow:1px 1px 0 #0A1E6E;">\</div><div class="a" style="left:970px;top:107px;width:14px;height:14px;border-radius:2px;border:1px solid #fff;background:linear-gradient(135deg,#DCE7FD 0%,#C4D6FC 50%,#B1C9FB 100%);box-shadow:0 1px 0 #98B2E8"></div><svg style="left:970px;top:107px" width="14" height="14" viewBox="0 0 14 14"><path d="M3.5 8.5 L7 5 L10.5 8.5" fill="none" stroke="#4D6185" stroke-width="2.2"/></svg><div class="a" style="left:970px;top:556px;width:14px;height:15px;border-radius:2px;border:1px solid #fff;background:linear-gradient(90deg,#C9DAFD,#BAD0FC);box-shadow:1px 1px 0 #98B2E8"></div><svg style="left:970px;top:556px" width="14" height="15" viewBox="0 0 14 15"><rect x="3.5" y="3.5" width="7" height="1" fill="#fff"/><rect x="4.0" y="4.5" width="7" height="1" fill="#7FA4F0"/><rect x="3.5" y="5.5" width="7" height="1" fill="#fff"/><rect x="4.0" y="6.5" width="7" height="1" fill="#7FA4F0"/><rect x="3.5" y="7.5" width="7" height="1" fill="#fff"/><rect x="4.0" y="8.5" width="7" height="1" fill="#7FA4F0"/><rect x="3.5" y="9.5" width="7" height="1" fill="#fff"/><rect x="4.0" y="10.5" width="7" height="1" fill="#7FA4F0"/></svg><div class="a" style="left:970px;top:618px;width:14px;height:14px;border-radius:2px;border:1px solid #fff;background:linear-gradient(135deg,#DCE7FD 0%,#C4D6FC 50%,#B1C9FB 100%);box-shadow:0 1px 0 #98B2E8"></div><svg style="left:970px;top:618px" width="14" height="14" viewBox="0 0 14 14"><path d="M3.5 5.5 L7 9 L10.5 5.5" fill="none" stroke="#4D6185" stroke-width="2.2"/></svg><div class="a" style="left:213px;top:636px;width:15px;height:14px;border-radius:2px;border:1px solid #fff;background:linear-gradient(135deg,#DCE7FD 0%,#C4D6FC 50%,#B1C9FB 100%);box-shadow:0 1px 0 #98B2E8"></div><svg style="left:213px;top:636px" width="15" height="14" viewBox="0 0 15 14"><path d="M9 3.5 L5.5 7 L9 10.5" fill="none" stroke="#4D6185" stroke-width="2.2"/></svg><div class="a" style="left:293px;top:636px;width:14px;height:13px;border-radius:2px;border:1px solid #fff;background:linear-gradient(180deg,#C9DAFD,#BAD0FC);box-shadow:1px 1px 0 #98B2E8"></div><svg style="left:293px;top:636px" width="14" height="13" viewBox="0 0 14 13"><rect x="3.0" y="3.0" width="1" height="7" fill="#fff"/><rect x="4.0" y="3.5" width="1" height="7" fill="#7FA4F0"/><rect x="5.0" y="3.0" width="1" height="7" fill="#fff"/><rect x="6.0" y="3.5" width="1" height="7" fill="#7FA4F0"/><rect x="7.0" y="3.0" width="1" height="7" fill="#fff"/><rect x="8.0" y="3.5" width="1" height="7" fill="#7FA4F0"/><rect x="9.0" y="3.0" width="1" height="7" fill="#fff"/><rect x="10.0" y="3.5" width="1" height="7" fill="#7FA4F0"/></svg><div class="a" style="left:952px;top:636px;width:15px;height:14px;border-radius:2px;border:1px solid #fff;background:linear-gradient(135deg,#DCE7FD 0%,#C4D6FC 50%,#B1C9FB 100%);box-shadow:0 1px 0 #98B2E8"></div><svg style="left:952px;top:636px" width="15" height="14" viewBox="0 0 15 14"><path d="M6 3.5 L9.5 7 L6 10.5" fill="none" stroke="#4D6185" stroke-width="2.2"/></svg><div class="a" style="left:16px;top:658px;width:177px;height:16px;background:linear-gradient(to bottom,#F3F1EC,#FEFEFB 60%,#F3F1EC)"></div><div class="a" style="left:17px;top:658px;width:15px;height:15px;border-radius:2px;border:1px solid #fff;background:linear-gradient(135deg,#DCE7FD 0%,#C4D6FC 50%,#B1C9FB 100%);box-shadow:0 1px 0 #98B2E8"></div><svg style="left:17px;top:658px" width="15" height="15" viewBox="0 0 15 15"><path d="M9 4 L5.5 7.5 L9 11" fill="none" stroke="#4D6185" stroke-width="2.2"/></svg><div class="a" style="left:34px;top:658px;width:122px;height:15px;border-radius:2px;border:1px solid #fff;background:linear-gradient(180deg,#C9DAFD,#BAD0FC);box-shadow:1px 1px 0 #98B2E8"></div><svg style="left:34px;top:658px" width="122" height="15" viewBox="0 0 122 15"><rect x="57.0" y="4.0" width="1" height="7" fill="#fff"/><rect x="58.0" y="4.5" width="1" height="7" fill="#7FA4F0"/><rect x="59.0" y="4.0" width="1" height="7" fill="#fff"/><rect x="60.0" y="4.5" width="1" height="7" fill="#7FA4F0"/><rect x="61.0" y="4.0" width="1" height="7" fill="#fff"/><rect x="62.0" y="4.5" width="1" height="7" fill="#7FA4F0"/><rect x="63.0" y="4.0" width="1" height="7" fill="#fff"/><rect x="64.0" y="4.5" width="1" height="7" fill="#7FA4F0"/></svg><div class="a" style="left:176px;top:658px;width:15px;height:15px;border-radius:2px;border:1px solid #fff;background:linear-gradient(135deg,#DCE7FD 0%,#C4D6FC 50%,#B1C9FB 100%);box-shadow:0 1px 0 #98B2E8"></div><svg style="left:176px;top:658px" width="15" height="15" viewBox="0 0 15 15"><path d="M6 4 L9.5 7.5 L6 11" fill="none" stroke="#4D6185" stroke-width="2.2"/></svg><svg style="left:0;top:0" width="1024" height="738"><path d="M983.5 659 V673" stroke="#000" stroke-width="1.2"/><path d="M213 657.5 H984" stroke="#000" stroke-width="1.1"/><path d="M867.6 657.5 L873.6 672.5 L932 672.5 L938 657.5 Z" fill="#fff"/><path d="M867.6 657.5 L873.6 672.5 L932 672.5 L938 657.5" fill="none" stroke="#000" stroke-width="1.1"/><path d="M737.4 657.5 L743.4 672.5 L790.9 672.5 L796.9 657.5 Z" fill="#fff"/><path d="M737.4 657.5 L743.4 672.5 L790.9 672.5 L796.9 657.5" fill="none" stroke="#000" stroke-width="1.1"/><path d="M665.5 657.5 L671.5 672.5 L736.9 672.5 L742.9 657.5 Z" fill="#fff"/><path d="M665.5 657.5 L671.5 672.5 L736.9 672.5 L742.9 657.5" fill="none" stroke="#000" stroke-width="1.1"/><path d="M608.4 657.5 L614.4 672.5 L665.0 672.5 L671.0 657.5 Z" fill="#fff"/><path d="M608.4 657.5 L614.4 672.5 L665.0 672.5 L671.0 657.5" fill="none" stroke="#000" stroke-width="1.1"/><path d="M538.6 657.5 L544.6 672.5 L607.9 672.5 L613.9 657.5 Z" fill="#fff"/><path d="M538.6 657.5 L544.6 672.5 L607.9 672.5 L613.9 657.5" fill="none" stroke="#000" stroke-width="1.1"/><path d="M483.8 657.5 L489.8 672.5 L538.1 672.5 L544.1 657.5 Z" fill="#fff"/><path d="M483.8 657.5 L489.8 672.5 L538.1 672.5 L544.1 657.5" fill="none" stroke="#000" stroke-width="1.1"/><path d="M406.2 657.5 L412.2 672.5 L483.3 672.5 L489.3 657.5 Z" fill="#fff"/><path d="M406.2 657.5 L412.2 672.5 L483.3 672.5 L489.3 657.5" fill="none" stroke="#000" stroke-width="1.1"/><path d="M342.7 657.5 L348.7 672.5 L405.7 672.5 L411.7 657.5 Z" fill="#fff"/><path d="M342.7 657.5 L348.7 672.5 L405.7 672.5 L411.7 657.5" fill="none" stroke="#000" stroke-width="1.1"/><path d="M273.75 657.5 L279.75 672.5 L342.2 672.5 L348.2 657.5 Z" fill="#fff"/><path d="M273.75 657.5 L279.75 672.5 L342.2 672.5 L348.2 657.5" fill="none" stroke="#000" stroke-width="1.1"/><path d="M221 657.5 L227 672.5 L273.25 672.5 L279.25 657.5 Z" fill="#fff"/><path d="M221 657.5 L227 672.5 L273.25 672.5 L279.25 657.5" fill="none" stroke="#000" stroke-width="1.1"/><path d="M790.9 657 L797.4 672.5 L867.1 672.5 L873.6 657 Z" fill="#ECE9D8"/><path d="M791.4 657.5 L797.4 672.5 L867.1 672.5 L873.1 657.5" fill="none" stroke="#000" stroke-width="1.1"/></svg><div class="a t" style="left:227.6px;top:659.29px;font-family:'Liberation Sans';font-size:11px;font-weight:400;color:#000;transform:scaleX(0.9499);transform-origin:0 0;">TopLayer</div><div class="a t" style="left:280.75px;top:659.29px;font-family:'Liberation Sans';font-size:11px;font-weight:400;color:#000;transform:scaleX(0.9339);transform-origin:0 0;">BottomLayer</div><div class="a t" style="left:349.7px;top:659.29px;font-family:'Liberation Sans';font-size:11px;font-weight:400;color:#000;transform:scaleX(0.9471);transform-origin:0 0;">TopOverlay</div><div class="a t" style="left:413.2px;top:659.29px;font-family:'Liberation Sans';font-size:11px;font-weight:400;color:#000;transform:scaleX(0.9265);transform-origin:0 0;">BottomOverlay</div><div class="a t" style="left:490.8px;top:659.29px;font-family:'Liberation Sans';font-size:11px;font-weight:400;color:#000;transform:scaleX(0.9853);transform-origin:0 0;">TopPaste</div><div class="a t" style="left:545.6px;top:659.29px;font-family:'Liberation Sans';font-size:11px;font-weight:400;color:#000;transform:scaleX(0.9431);transform-origin:0 0;">BottomPaste</div><div class="a t" style="left:615.4px;top:659.29px;font-family:'Liberation Sans';font-size:11px;font-weight:400;color:#000;transform:scaleX(0.9748);transform-origin:0 0;">TopSolder</div><div class="a t" style="left:672.5px;top:659.29px;font-family:'Liberation Sans';font-size:11px;font-weight:400;color:#000;transform:scaleX(0.9331);transform-origin:0 0;">BottomSolder</div><div class="a t" style="left:744.4px;top:659.29px;font-family:'Liberation Sans';font-size:11px;font-weight:400;color:#000;transform:scaleX(0.9317);transform-origin:0 0;">DrillGuide</div><div class="a t" style="left:798.4px;top:659.29px;font-family:'Liberation Sans';font-size:11px;font-weight:400;color:#000;transform:scaleX(0.9713);transform-origin:0 0;">KeepOutLayer</div><div class="a t" style="left:874.6px;top:659.29px;font-family:'Liberation Sans';font-size:11px;font-weight:400;color:#000;transform:scaleX(0.9630);transform-origin:0 0;">DrillDrawing</div><div class="a" style="left:4px;top:681px;width:1016px;height:1px;background:#fff"></div><svg style="left:14px;top:685px" width="15" height="14" viewBox="0 0 15 14"><path d="M0.5 13 L0.5 8 L3 6 L8 5 L8 2 L13.5 5.5 L8 10 L8 8 L4 8.5 L1.5 10 L1.5 13 Z" fill="#8C8C00"/><path d="M0.5 8 L3 5 L8 4 L8 1 L13.5 5.5 L8 6.5 L3 7.5 Z" fill="#F8F000"/><path d="M3 6 L5 5 M6 5 L9 4 M9 3 L11 4" stroke="#FFFFA0" stroke-width="0.8"/></svg><svg style="left:187px;top:685px" width="15" height="14" viewBox="0 0 15 14"><path d="M0.5 13 L0.5 8 L3 6 L8 5 L8 2 L13.5 5.5 L8 10 L8 8 L4 8.5 L1.5 10 L1.5 13 Z" fill="#8C8C00"/><path d="M0.5 8 L3 5 L8 4 L8 1 L13.5 5.5 L8 6.5 L3 7.5 Z" fill="#F8F000"/><path d="M3 6 L5 5 M6 5 L9 4 M9 3 L11 4" stroke="#FFFFA0" stroke-width="0.8"/></svg><svg style="left:566px;top:685px" width="15" height="14" viewBox="0 0 15 14"><path d="M0.5 13 L0.5 8 L3 6 L8 5 L8 2 L13.5 5.5 L8 10 L8 8 L4 8.5 L1.5 10 L1.5 13 Z" fill="#8C8C00"/><path d="M0.5 8 L3 5 L8 4 L8 1 L13.5 5.5 L8 6.5 L3 7.5 Z" fill="#F8F000"/><path d="M3 6 L5 5 M6 5 L9 4 M9 3 L11 4" stroke="#FFFFA0" stroke-width="0.8"/></svg><div class="a t" style="left:33.8px;top:686.55px;font-family:'Liberation Serif';font-size:12px;font-weight:400;color:#000;transform:scaleX(0.8628);transform-origin:0 0;">X:9120mil Y:9420mil</div><div class="a t" style="left:208.2px;top:686.55px;font-family:'Liberation Serif';font-size:12px;font-weight:400;color:#000;transform:scaleX(0.8556);transform-origin:0 0;">Text "D3" (9129mil,9365.981mil)</div><div class="a t" style="left:354.2px;top:686.55px;font-family:'Liberation Serif';font-size:12px;font-weight:400;color:#000;transform:scaleX(0.8365);transform-origin:0 0;">TopOverlay</div><div class="a t" style="left:595.5px;top:686.55px;font-family:'Liberation Serif';font-size:12px;font-weight:400;color:#000;transform:scaleX(0.8537);transform-origin:0 0;">Component D3 Comment:1N4002 Footprint: DIODE0.4</div><svg style="left:1000px;top:685px" width="16" height="18" viewBox="0 0 16 18"><path d="M1.5 1.5 H14.5 V13.5 H9 L6 16.5 V13.5 H1.5 Z" fill="#FFFFC0" stroke="#000" stroke-width="1"/><path d="M5.5 5 Q5.5 3 8 3 Q10.5 3 10.5 5 Q10.5 6.5 8 7.5 V9" fill="none" stroke="#000080" stroke-width="1.6"/><rect x="7" y="10.2" width="2" height="2" fill="#000080"/></svg><svg style="left:11px;top:712px" width="17" height="17" viewBox="0 0 17 17"><path d="M1.5 1 V16" stroke="#000" stroke-width="2"/><rect x="4.5" y="3.5" width="5" height="3" fill="#fff" stroke="#000"/><rect x="4.5" y="8.5" width="8" height="3" fill="#fff" stroke="#000"/><path d="M11 14 H4 M6 12 L4 14 L6 16" stroke="#000080" stroke-width="1.3" fill="none"/></svg><svg style="left:32px;top:712px" width="17" height="17" viewBox="0 0 17 17"><rect x="1.5" y="1.5" width="3" height="3" fill="#fff" stroke="#000"/><rect x="6.5" y="7.5" width="6" height="3" fill="#fff" stroke="#000"/><rect x="9.5" y="12.5" width="6" height="3" fill="#fff" stroke="#000"/><path d="M6 3 H12 M10 1 L12 3 L10 5 M9 14 H2 M4 12 L2 14 L4 16" stroke="#000080" stroke-width="1.3" fill="none"/></svg><svg style="left:56px;top:712px" width="17" height="17" viewBox="0 0 17 17"><path d="M11.5 1 V16" stroke="#000" stroke-width="2"/><rect x="5.5" y="3.5" width="5" height="3" fill="#fff" stroke="#000"/><rect x="1.5" y="8.5" width="9" height="3" fill="#fff" stroke="#000"/><path d="M3 14 H10 M8 12 L10 14 L8 16" stroke="#000080" stroke-width="1.3" fill="none"/></svg><svg style="left:76px;top:712px" width="17" height="17" viewBox="0 0 17 17"><rect x="1.5" y="6.5" width="3" height="5" fill="#fff" stroke="#000"/><rect x="7.5" y="4.5" width="3" height="9" fill="#fff" stroke="#000"/><rect x="12.5" y="7.5" width="3" height="3" fill="#fff" stroke="#000"/><path d="M4.5 9 H7.5 M10.5 9 H12.5" stroke="#000"/></svg><svg style="left:97px;top:712px" width="17" height="17" viewBox="0 0 17 17"><path d="M1.5 5 V11 M1.5 8 H7" stroke="#000"/><rect x="6.5" y="3.5" width="3" height="8" fill="#fff" stroke="#000"/><path d="M9.5 8 H13 M13 6 H15 V10 H13" stroke="#000" fill="none"/><path d="M3 14.5 H8 M5 12.5 L3 14.5 L5 16.5 M10 14.5 H15 M13 12.5 L15 14.5 L13 16.5" stroke="#000080" stroke-width="1.3" fill="none"/></svg><svg style="left:120px;top:712px" width="17" height="17" viewBox="0 0 17 17"><rect x="1.5" y="3.5" width="3" height="5" fill="#fff" stroke="#000"/><rect x="6.5" y="2.5" width="3" height="7" fill="#fff" stroke="#000"/><rect x="11.5" y="4.5" width="3" height="3" fill="#fff" stroke="#000"/><path d="M1 14.5 H6 M4 12.5 L6 14.5 L4 16.5 M15 14.5 H10 M12 12.5 L10 14.5 L12 16.5" stroke="#000080" stroke-width="1.3" fill="none"/></svg><svg style="left:155px;top:712px" width="17" height="17" viewBox="0 0 17 17"><path d="M1 1.5 H13" stroke="#000" stroke-width="2"/><rect x="1.5" y="4.5" width="3" height="5" fill="#fff" stroke="#000"/><rect x="5.5" y="4.5" width="3" height="9" fill="#fff" stroke="#000"/><path d="M11 14 V4 M9 6 L11 4 L13 6" stroke="#000080" stroke-width="1.3" fill="none"/></svg><svg style="left:175px;top:712px" width="17" height="17" viewBox="0 0 17 17"><rect x="1.5" y="11.5" width="3" height="4" fill="#fff" stroke="#000"/><rect x="6.5" y="4.5" width="3" height="6" fill="#fff" stroke="#000"/><rect x="11.5" y="1.5" width="3" height="4" fill="#fff" stroke="#000"/><path d="M3 9 V3 M1 5 L3 3 L5 5 M13 8 V15 M11 13 L13 15 L15 13" stroke="#000080" stroke-width="1.3" fill="none"/></svg><svg style="left:200px;top:712px" width="17" height="17" viewBox="0 0 17 17"><path d="M0 15.5 H13" stroke="#000" stroke-width="2"/><rect x="1.5" y="6.5" width="3" height="7" fill="#fff" stroke="#000"/><rect x="5.5" y="3.5" width="3" height="10" fill="#fff" stroke="#000"/><path d="M11 3 V13 M9 11 L11 13 L13 11" stroke="#000080" stroke-width="1.3" fill="none"/></svg><svg style="left:223px;top:712px" width="17" height="17" viewBox="0 0 17 17"><rect x="2.5" y="1.5" width="5" height="3" fill="#fff" stroke="#000"/><rect x="0.5" y="6.5" width="8" height="3" fill="#fff" stroke="#000"/><rect x="1.5" y="12.5" width="6" height="3" fill="#fff" stroke="#000"/><path d="M4.5 4.5 V6.5 M4.5 9.5 V12.5" stroke="#000"/></svg><svg style="left:243px;top:712px" width="17" height="17" viewBox="0 0 17 17"><path d="M1 1.5 H8 M1 15.5 H8 M4.5 1.5 V5 M4.5 12 V15.5" stroke="#000" stroke-width="1.2"/><rect x="0.5" y="6.5" width="8" height="4" fill="#fff" stroke="#000"/><path d="M12 2 V15 M10 4 L12 2 L14 4 M10 13 L12 15 L14 13" stroke="#000080" stroke-width="1.3" fill="none"/></svg><svg style="left:264px;top:712px" width="17" height="17" viewBox="0 0 17 17"><rect x="1.5" y="1.5" width="5" height="4" fill="#fff" stroke="#000"/><rect x="0.5" y="7.5" width="8" height="3" fill="#fff" stroke="#000"/><rect x="1.5" y="12.5" width="6" height="3" fill="#fff" stroke="#000"/><path d="M12 1 V6 M10 4 L12 6 L14 4 M12 16 V11 M10 13 L12 11 L14 13" stroke="#000080" stroke-width="1.3" fill="none"/></svg><svg style="left:298px;top:712px" width="17" height="17" viewBox="0 0 17 17"><rect x="0.5" y="0.5" width="15" height="15" fill="none" stroke="#808080" stroke-width="1.2" /><path d="M1 14 L14 1 M8 15 L15 8" stroke="#A0A0A0"/><rect x="3.5" y="2.5" width="3" height="4" fill="#fff" stroke="#000" stroke-width="1.2"/><rect x="9.5" y="3.5" width="3" height="7" fill="#fff" stroke="#000" stroke-width="1.2"/><rect x="3.5" y="10.5" width="3" height="3" fill="#fff" stroke="#000" stroke-width="1.2"/></svg><svg style="left:320px;top:712px" width="17" height="17" viewBox="0 0 17 17"><rect x="0.5" y="0.5" width="15" height="15" fill="none" stroke="#808080" stroke-width="1.2" stroke-dasharray="2 1"/><rect x="3.5" y="2.5" width="3" height="4" fill="#fff" stroke="#000" stroke-width="1.2"/><rect x="9.5" y="3.5" width="3" height="7" fill="#fff" stroke="#000" stroke-width="1.2"/><rect x="3.5" y="10.5" width="3" height="3" fill="#fff" stroke="#000" stroke-width="1.2"/></svg><svg style="left:342px;top:712px" width="17" height="17" viewBox="0 0 17 17"><path d="M4 0 V16 M11 0 V16 M0 4 H16 M0 12 H16" stroke="#808080" stroke-width="1.2"/><rect x="4.5" y="4.5" width="6" height="6" fill="#fff" stroke="#000" stroke-width="1.2"/><path d="M6 0 L8 2 L10 0 Z M0 6 L2 8 L0 10 Z" fill="#0000A0"/></svg><svg style="left:364px;top:712px" width="17" height="17" viewBox="0 0 17 17"><rect x="0.5" y="0.5" width="15" height="15" fill="none" stroke="#808080" stroke-width="1.2" /><rect x="3.5" y="2.5" width="8" height="3" fill="#F0F080" stroke="#000" stroke-width="1.2"/><rect x="5.5" y="9.5" width="5" height="4" fill="#F0F080" stroke="#000" stroke-width="1.2"/><path d="M1 4 H3.5 M11.5 4 H15 M2 11.5 H5.5 M10.5 11.5 H14" stroke="#000" stroke-width="1.2"/></svg><svg style="left:386px;top:712px" width="17" height="17" viewBox="0 0 17 17"><rect x="0.5" y="0.5" width="15" height="15" fill="none" stroke="#808080" stroke-width="1.2" /><rect x="5.5" y="8.5" width="5" height="4" fill="#F0F080" stroke="#000" stroke-width="1.2"/><path d="M2 10.5 H5.5 M10.5 10.5 H14" stroke="#000" stroke-width="1.2"/></svg><svg style="left:407px;top:711px" width="18" height="18" viewBox="0 0 18 18"><rect x="4.5" y="3.5" width="12" height="13" fill="#C0C0C0" stroke="#000" stroke-width="1"/><rect x="4" y="2" width="13" height="2" fill="#0000A0"/><rect x="7" y="6" width="3" height="2" fill="#fff" stroke="#000" stroke-width="0.7"/><rect x="11" y="6" width="3" height="2" fill="#fff" stroke="#000" stroke-width="0.7"/><rect x="7" y="10" width="3" height="2" fill="#fff" stroke="#000" stroke-width="0.7"/><rect x="11" y="10" width="3" height="2" fill="#fff" stroke="#000" stroke-width="0.7"/><path d="M0 1 L5 5 M3 0 L4 4 M0 5 L4 5 M5 0 L5 3" stroke="#E0D000" stroke-width="1"/></svg>
</body></html>
